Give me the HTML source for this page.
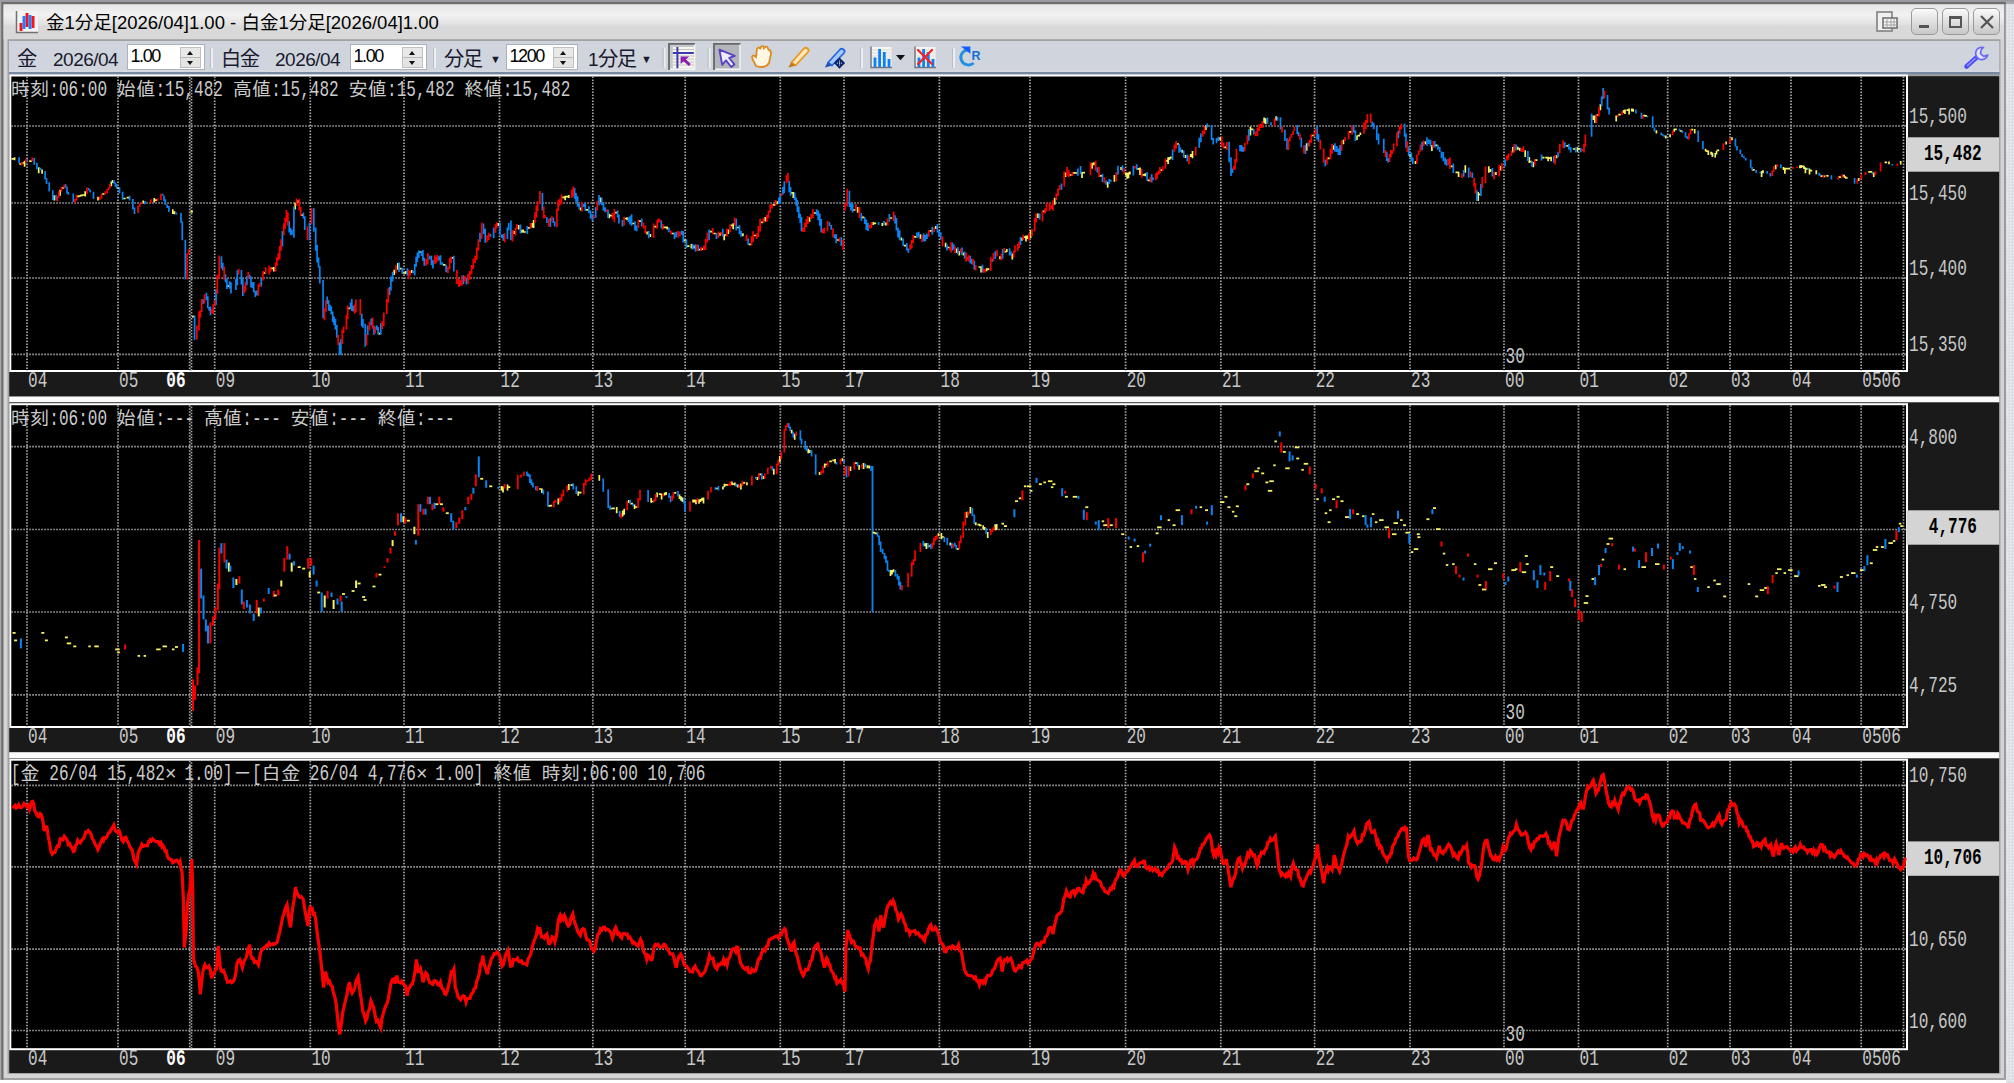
<!DOCTYPE html>
<html lang="ja"><head><meta charset="utf-8"><title>金1分足[2026/04]1.00 - 白金1分足[2026/04]1.00</title>
<style>
html,body{margin:0;padding:0;}
body{width:2014px;height:1083px;overflow:hidden;position:relative;background:#b4b4bc;font-family:"Liberation Sans","Noto Sans CJK JP",sans-serif;}
.abs{position:absolute;}
#ttext{position:absolute;left:46px;top:10.5px;font-size:18.5px;line-height:24px;color:#000;white-space:nowrap;transform-origin:0 0;}
#tool{position:absolute;left:8px;top:41px;width:1992px;height:31px;background:#d0d4dc;border-top:1px solid #b8b8bc;}
.tt{position:absolute;top:46.5px;font-size:20.3px;letter-spacing:-1.6px;line-height:24px;color:#1a1a30;white-space:nowrap;}
.n{font-size:19px;letter-spacing:-0.5px;top:47.5px;}
.spin{position:absolute;top:44px;height:26px;background:#fff;border:1px solid #aab0bc;box-sizing:border-box;}
.spin span{position:absolute;left:2.5px;top:-1px;font-size:18px;letter-spacing:-1.4px;line-height:24px;color:#000;}
.sb{position:absolute;right:3px;top:2px;width:21px;height:21px;background:linear-gradient(#e8e8e8 0,#e8e8e8 48%,#b8b8b8 48%,#b8b8b8 54%,#e4e4e4 54%);border:1px solid #c0c0c0;box-sizing:border-box;}
.sb:before{content:"";position:absolute;left:6px;top:3px;border:3.5px solid transparent;border-top:0;border-bottom:4px solid #111;}
.sb:after{content:"";position:absolute;left:6px;top:13px;border:3.5px solid transparent;border-bottom:0;border-top:4px solid #111;}
.sep{position:absolute;top:48px;width:2px;height:20px;background:#eceef2;border-left:1px solid #b8bcc4;}
.j{font-family:"Liberation Mono","IPAGothic",monospace;}
svg text{font-family:"Liberation Mono","IPAGothic",monospace;}
</style></head><body>

<svg class="abs" style="left:0;top:0" width="2014" height="1083" viewBox="0 0 2014 1083">
<defs><linearGradient id="tg" x1="0" y1="0" x2="0" y2="1"><stop offset="0" stop-color="#e6e6e6"/><stop offset="0.3" stop-color="#f1f1f1"/><stop offset="0.56" stop-color="#e2e2e2"/><stop offset="0.63" stop-color="#d9d9d9"/><stop offset="1" stop-color="#d8d8d8"/></linearGradient>
<pattern id="pt" width="3" height="3" patternUnits="userSpaceOnUse"><rect width="3" height="3" fill="#dcdee6"/><rect width="1.5" height="1.5" fill="#ececf2"/></pattern></defs>
<rect width="2014" height="1083" fill="#fff"/>
<rect x="0" y="0" width="2014" height="1080" fill="#a9a9ad"/>
<rect x="1.3" y="1.6" width="2004.5" height="1078" fill="#6e6e6e"/>
<rect x="0" y="0" width="2014" height="1.6" fill="#9c9ca4"/>
<rect x="3.5" y="4.4" width="2000.5" height="1073.8" fill="#d4d4d4"/>
<rect x="3.5" y="4.4" width="2000.5" height="35" fill="url(#tg)"/>
<rect x="2004.2" y="4.4" width="1.8" height="1075" fill="#a2a2a2"/>
<rect x="2006" y="4" width="8" height="1079" fill="url(#pt)"/>
<rect x="3.5" y="1078.2" width="2002.5" height="1.6" fill="#a8a8a8"/>
<rect x="7.5" y="39.2" width="1993" height="1034.8" fill="#a2a2a2"/>
<rect x="9" y="41" width="1990.3" height="31" fill="#d0d4dc"/>
<rect x="9" y="70" width="1990.3" height="2" fill="#d6dae0"/>
<rect x="9" y="72" width="1990.3" height="2.4" fill="#7688a2"/>
</svg>
<svg class="abs" style="left:14px;top:10px" width="26" height="24" viewBox="0 0 26 24">
<rect x="2" y="1" width="22" height="21" fill="#f4f4f4"/><path d="M2.5 1V22.5H24" fill="none" stroke="#707070" stroke-width="1.5"/>
<path d="M7 13v8M13 3v14M19 6v12" stroke="#ff1010" stroke-width="3"/><path d="M10 6v13M16 5v14" stroke="#1e80ff" stroke-width="3"/></svg>
<div id="ttext">金1分足[2026/04]1.00 - 白金1分足[2026/04]1.00</div>
<div class="abs" style="left:1911px;top:8px;width:27px;height:27px;border:1.5px solid #9a9a9a;border-radius:5px;box-sizing:border-box;background:linear-gradient(#fafafa,#e0e0e0 50%,#c8c8c8);"></div><div class="abs" style="left:1919px;top:25px;width:10px;height:3px;background:#555;"></div>
<div class="abs" style="left:1942px;top:8px;width:27px;height:27px;border:1.5px solid #9a9a9a;border-radius:5px;box-sizing:border-box;background:linear-gradient(#fafafa,#e0e0e0 50%,#c8c8c8);"></div><div class="abs" style="left:1949px;top:16px;width:13px;height:12px;border:2px solid #555;border-top-width:3px;box-sizing:border-box;"></div>
<div class="abs" style="left:1973px;top:8px;width:27px;height:27px;border:1.5px solid #9a9a9a;border-radius:5px;box-sizing:border-box;background:linear-gradient(#fafafa,#e0e0e0 50%,#c8c8c8);"></div><svg class="abs" style="left:1973px;top:8px" width="27" height="27"><path d="M8 8L20 20M20 8L8 20" stroke="#555" stroke-width="2.2"/></svg>
<svg class="abs" style="left:1875px;top:10px" width="26" height="26" viewBox="0 0 26 26"><rect x="2" y="2" width="15" height="19" fill="#f0f0f0" stroke="#808080" stroke-width="1.6"/><rect x="8" y="8" width="14" height="10" fill="#f8f8f8" stroke="#707070" stroke-width="1.6"/><path d="M8 12h14M8 15h14M12 8v10M16 8v10M19 8v10" stroke="#a0a0a0" stroke-width="1"/></svg>
<div class="tt" style="left:17px">金</div><div class="tt n" style="left:53px">2026/04</div>
<div class="spin" style="left:127px;width:78px"><span>1.00</span><div class="sb"></div></div>
<div class="sep" style="left:210px"></div>
<div class="tt" style="left:221px">白金</div><div class="tt n" style="left:275px">2026/04</div>
<div class="spin" style="left:350px;width:77px"><span>1.00</span><div class="sb"></div></div>
<div class="sep" style="left:433px"></div>
<div class="tt" style="left:444px">分足</div><div class="tt" style="left:490px;font-size:11px">&#9660;</div>
<div class="spin" style="left:506px;width:72px"><span>1200</span><div class="sb"></div></div>
<div class="tt" style="left:588px"><span class="n">1</span>分足</div><div class="tt" style="left:641px;font-size:11px">&#9660;</div>
<svg class="abs" style="left:660px;top:42px" width="340" height="30" viewBox="660 42 340 30">
<rect x="669" y="43" width="26" height="27" fill="#c4c8ce"/><path d="M669 70V43.8h26" fill="none" stroke="#686868" stroke-width="1.8"/><path d="M670 69.3h24.6V44.5" fill="none" stroke="#f4f4f4" stroke-width="1.5"/>
<rect x="672.8" y="47" width="21" height="21.3" fill="#f6f6ec"/><path d="M673 49.5h21M673 56h21M673 59h21M673 62h21M673 65h21" stroke="#c4c4c0" stroke-width="1"/>
<path d="M677.4 47v21.3M672.8 52.9h21" stroke="#3c3cb0" stroke-width="2"/><path d="M689.8 65L682.4 58.2" stroke="#9020b0" stroke-width="3" fill="none"/><path d="M680.6 56.6h8.6l-8.6 7.4z" fill="#9020b0"/>
<rect x="663.6" y="48" width="2" height="20" fill="#eceef2"/><rect x="662.6" y="48" width="1" height="20" fill="#b8bcc4"/>
<rect x="708.6" y="48" width="2" height="20" fill="#eceef2"/><rect x="707.6" y="48" width="1" height="20" fill="#b8bcc4"/>
<rect x="714" y="43" width="26.5" height="27" fill="#b2b6ba"/><path d="M714 70V43.8h26.5" fill="none" stroke="#686868" stroke-width="1.8"/><path d="M715 69.3h25V44.5" fill="none" stroke="#f4f4f4" stroke-width="1.5"/>
<path d="M719.4 49.6l15.4 6.2-5.6 2.2 5.2 6.4-3.2 2.6-5.2-6.6-3.8 4.4z" fill="#f0ecff" stroke="#5a40c4" stroke-width="1.9" stroke-linejoin="round"/>
<path d="M753 60c-2-4 0-6 3-3l1-8c1-2 3-2 3 0l1-2c1-2 3-1 3 1l1-1c2-1 3 0 3 2l1 1c2 0 2 2 2 4l-2 9c-2 4-8 5-13 3z" fill="#fff6e4" stroke="#dc8c20" stroke-width="1.8"/>
<path d="M791.5 62.5L804 48.5c2-2 6 1 4 3.500L795.500 65.500z" fill="#ffe8c0" stroke="#e89820" stroke-width="1.8" stroke-linejoin="round"/><path d="M788.400 67.600l2.800-5.400 4 3.600z" fill="#c07818"/>
<path d="M828 62.500L840 49.500c2-2 6 1 4 3.500L832 65.500z" fill="#a8c8ff" stroke="#2868e0" stroke-width="1.8" stroke-linejoin="round"/><path d="M824.800 67.600l2.800-5.400 4 3.600z" fill="#2050b0"/><path d="M839.500 57.500l5.600 5.600-5.600 5.600-5.600-5.600z" fill="#0c2468"/><path d="M839.500 60.500v5.200M836.900 63.100h5.200" stroke="#e8ecff" stroke-width="1" stroke-dasharray="1 1"/>
<rect x="861" y="48" width="2" height="20" fill="#eceef2"/><rect x="860" y="48" width="1" height="20" fill="#b8bcc4"/>
<rect x="871.500" y="47" width="20" height="20" fill="#f4f4f0"/><path d="M872 50h19M872 53h19M872 56h19M872 59h19M872 62h19" stroke="#dcdcd8" stroke-width="1"/>
<path d="M871 46.500v21h21" stroke="#70747c" stroke-width="1.400" fill="none"/><path d="M875 67v-9.500M879.600 67v-18M884.300 67v-15M889 67v-8" stroke="#0c80f8" stroke-width="2.800"/>
<path d="M896 55h9l-4.500 5.200z" fill="#101010"/>
<rect x="915.500" y="47" width="20" height="20" fill="#f4f4f0"/><path d="M916 50h19M916 53h19M916 56h19M916 59h19M916 62h19" stroke="#dcdcd8" stroke-width="1"/>
<path d="M915 46.500v21h21" stroke="#70747c" stroke-width="1.400" fill="none"/><path d="M919 67v-9.500M923.600 67v-18M928.300 67v-15M933 67v-8" stroke="#0c80f8" stroke-width="2.800"/><path d="M918 50l14 14M932 50l-14 14" stroke="#f82020" stroke-width="2.200" stroke-linecap="round"/>
<rect x="953" y="48" width="2" height="20" fill="#eceef2"/><rect x="952" y="48" width="1" height="20" fill="#b8bcc4"/>
<path d="M969.7 49.9A7.6 7.6 0 1 0 973.6 63" fill="none" stroke="#2090e4" stroke-width="2.9"/><path d="M960.8 46.4h9.6v7.4z" fill="#1060ff"/>
</svg>
<div class="abs" style="left:971.5px;top:48px;font-size:12.5px;font-weight:bold;color:#1070d8;line-height:16px;">R</div>
<svg class="abs" style="left:1962px;top:44px" width="28" height="28" viewBox="0 0 28 28"><path d="M4.500 22.500L14.500 13.500" stroke="#4a4aff" stroke-width="4.600" stroke-linecap="round"/><path d="M5.500 21.500L13 14.800" stroke="#9a9aff" stroke-width="1.400" stroke-linecap="round"/><path d="M21.500 3.500a6.200 6.200 0 1 0 4.300 7.600l-4.200 1.300-3.200-3 1.200-4.500z" fill="#e4e4ff" stroke="#6a6af4" stroke-width="1.700" stroke-linejoin="round"/></svg>
<svg class="abs" style="left:0;top:0" width="2014" height="1083" viewBox="0 0 2014 1083">
<rect x="9.3" y="76.2" width="1989.8" height="320.4" fill="#1a1a1a"/>
<rect x="10.3" y="75.5" width="1896.7" height="295.5" fill="#000" stroke="#fff" stroke-width="2"/>
<rect x="9.3" y="402.2" width="1989.8" height="350.1" fill="#1a1a1a"/>
<rect x="10.3" y="404.2" width="1896.7" height="322.8" fill="#000" stroke="#fff" stroke-width="2"/>
<rect x="9.3" y="758.2" width="1989.8" height="314.8" fill="#1a1a1a"/>
<rect x="10.3" y="759.7" width="1896.7" height="289.5" fill="#000" stroke="#fff" stroke-width="2"/>
<rect x="9.3" y="396.6" width="1989.8" height="5.6" fill="#fafafa"/>
<rect x="9.3" y="752.3" width="1989.8" height="5.9" fill="#fafafa"/>
<path d="M27 76.5V371 M118 76.5V371 M214.7 76.5V371 M310.3 76.5V371 M404 76.5V371 M499.5 76.5V371 M592.8 76.5V371 M685.2 76.5V371 M780.3 76.5V371 M844 76.5V371 M939.4 76.5V371 M1030 76.5V371 M1125.6 76.5V371 M1220.8 76.5V371 M1314.6 76.5V371 M1410 76.5V371 M1504 76.5V371 M1578.5 76.5V371 M1667.7 76.5V371 M1730 76.5V371 M1791 76.5V371 M1861.2 76.5V371 M1903.5 76.5V371 M189.7 76.5V371 M191.5 78V371 M11.3 126H1906 M11.3 203H1906 M11.3 278H1906 M11.3 354.3H1906 M27 405.2V727 M118 405.2V727 M214.7 405.2V727 M310.3 405.2V727 M404 405.2V727 M499.5 405.2V727 M592.8 405.2V727 M685.2 405.2V727 M780.3 405.2V727 M844 405.2V727 M939.4 405.2V727 M1030 405.2V727 M1125.6 405.2V727 M1220.8 405.2V727 M1314.6 405.2V727 M1410 405.2V727 M1504 405.2V727 M1578.5 405.2V727 M1667.7 405.2V727 M1730 405.2V727 M1791 405.2V727 M1861.2 405.2V727 M1903.5 405.2V727 M189.7 405.2V727 M191.5 406.7V727 M11.3 446.7H1906 M11.3 529.5H1906 M11.3 612H1906 M11.3 694.8H1906 M27 760.7V1049.2 M118 760.7V1049.2 M214.7 760.7V1049.2 M310.3 760.7V1049.2 M404 760.7V1049.2 M499.5 760.7V1049.2 M592.8 760.7V1049.2 M685.2 760.7V1049.2 M780.3 760.7V1049.2 M844 760.7V1049.2 M939.4 760.7V1049.2 M1030 760.7V1049.2 M1125.6 760.7V1049.2 M1220.8 760.7V1049.2 M1314.6 760.7V1049.2 M1410 760.7V1049.2 M1504 760.7V1049.2 M1578.5 760.7V1049.2 M1667.7 760.7V1049.2 M1730 760.7V1049.2 M1791 760.7V1049.2 M1861.2 760.7V1049.2 M1903.5 760.7V1049.2 M189.7 760.7V1049.2 M191.5 762.2V1049.2 M11.3 785.4H1906 M11.3 866.8H1906 M11.3 949.2H1906 M11.3 1030.5H1906" stroke="#a8a8a8" stroke-width="1.7" stroke-dasharray="1.5 1.5" fill="none"/>
<path d="M12.6 808.2 L13.8 806.9 L15.0 805.6 L16.2 808.0 L17.4 806.9 L18.7 804.7 L20.1 807.6 L21.4 807.7 L22.8 806.0 L24.1 803.4 L25.4 805.0 L26.8 806.6 L28.1 805.4 L29.5 809.5 L30.5 806.5 L31.6 801.8 L32.7 801.5 L33.7 803.9 L34.8 810.9 L36.2 813.1 L37.5 816.2 L38.8 816.7 L40.2 813.6 L41.5 814.8 L42.8 820.3 L44.2 831.0 L45.5 827.4 L46.9 827.0 L48.2 835.7 L49.5 843.0 L50.9 851.1 L52.2 854.0 L53.6 852.4 L54.9 852.4 L56.2 848.5 L57.6 845.7 L58.9 846.1 L60.3 838.7 L61.6 839.0 L62.9 839.7 L64.3 836.3 L65.6 837.8 L67.0 839.7 L68.3 844.4 L69.6 843.6 L71.0 847.0 L72.1 847.3 L73.3 851.5 L74.5 851.1 L75.5 845.7 L76.6 844.4 L77.7 840.3 L79.0 842.5 L80.3 843.0 L81.7 840.3 L83.0 839.0 L84.4 837.0 L85.7 832.1 L87.0 832.3 L88.4 830.6 L89.7 832.1 L91.1 834.5 L92.4 838.8 L93.7 840.7 L95.1 844.4 L96.4 846.0 L97.8 849.7 L98.9 847.5 L100.1 844.1 L101.2 841.7 L102.3 839.2 L103.4 840.7 L104.4 837.7 L105.8 838.1 L107.1 836.3 L108.5 832.7 L109.8 832.3 L111.1 829.6 L112.5 827.5 L113.8 825.1 L115.2 830.5 L116.5 831.8 L117.8 832.7 L119.2 831.0 L120.5 834.5 L121.9 840.3 L123.2 841.7 L124.5 837.7 L125.9 837.3 L127.2 840.8 L128.5 843.0 L129.9 847.1 L131.2 848.4 L132.6 851.8 L133.9 859.1 L135.2 861.7 L136.6 864.4 L137.9 854.5 L139.3 849.7 L140.6 848.0 L141.9 844.4 L143.3 846.3 L144.6 845.7 L146.0 845.7 L147.3 845.8 L148.6 841.7 L150.0 839.7 L151.3 841.0 L152.7 839.0 L154.0 840.4 L155.3 841.2 L156.7 841.7 L158.0 841.7 L159.3 844.1 L160.7 842.5 L161.8 846.5 L162.8 845.4 L163.9 847.0 L165.1 851.1 L166.2 850.8 L167.4 856.4 L168.7 858.6 L170.1 859.4 L171.4 859.6 L172.7 862.7 L174.1 862.0 L175.4 860.4 L176.6 860.1 L177.7 861.6 L178.9 863.1 L180.0 861.2 L181.0 867.8 L182.1 872.5 L183.4 899.3 L184.3 947.5 L186.1 931.4 L187.5 904.6 L188.8 893.9 L190.1 888.5 L191.8 859.1 L192.8 893.9 L193.4 958.2 L194.4 962.0 L195.5 966.2 L196.8 967.0 L198.2 971.6 L199.3 980.8 L200.3 994.3 L202.2 976.9 L203.5 968.4 L204.9 964.9 L206.2 967.7 L207.6 967.6 L208.9 966.1 L210.2 968.9 L211.6 978.3 L212.9 974.2 L214.2 972.9 L215.3 970.3 L216.4 968.9 L218.3 946.1 L220.1 966.2 L221.2 971.0 L222.3 971.6 L223.6 970.6 L225.0 974.2 L226.3 978.0 L227.6 982.3 L229.0 981.9 L230.3 980.9 L231.7 982.6 L233.0 981.8 L234.3 979.6 L235.7 973.6 L237.0 963.5 L238.4 960.3 L239.7 959.5 L241.0 963.1 L242.4 967.6 L243.7 962.7 L245.0 959.5 L246.4 957.0 L247.7 950.1 L249.6 944.8 L250.7 954.0 L251.7 958.2 L253.1 958.2 L254.4 962.2 L255.8 961.3 L257.1 962.5 L258.4 964.9 L259.8 956.7 L261.1 951.5 L262.5 949.4 L263.8 947.5 L265.1 947.5 L266.5 945.2 L267.8 946.1 L269.1 942.9 L270.5 944.8 L271.8 944.8 L273.2 943.6 L274.5 944.3 L275.8 943.4 L277.2 942.0 L278.5 936.5 L279.9 931.4 L281.2 924.8 L282.5 918.0 L283.9 914.0 L285.2 908.6 L287.1 904.6 L288.2 913.6 L289.2 920.7 L290.6 927.4 L291.9 913.5 L293.3 904.6 L294.3 898.2 L295.4 887.2 L296.6 892.1 L297.8 893.9 L299.0 896.9 L300.1 897.4 L301.3 896.6 L303.2 899.3 L304.2 905.4 L305.3 912.7 L306.6 918.8 L308.0 926.0 L309.1 913.8 L310.1 906.0 L311.2 909.4 L312.3 908.9 L313.3 914.0 L314.4 913.6 L315.5 918.0 L317.4 934.1 L319.2 947.5 L320.3 955.2 L321.4 966.2 L322.4 975.0 L323.5 987.6 L325.4 971.6 L326.7 976.0 L328.1 982.3 L329.4 981.1 L330.7 985.0 L332.1 986.2 L333.4 993.0 L334.8 996.4 L336.1 1003.7 L338.0 1021.1 L339.6 1034.5 L341.5 1022.5 L342.8 1012.2 L344.1 1006.4 L345.5 1000.3 L346.8 995.7 L348.2 986.3 L349.5 982.3 L350.8 989.7 L352.2 993.0 L353.5 991.0 L354.8 987.6 L355.9 982.1 L357.0 979.1 L358.1 976.9 L359.1 984.1 L360.2 993.0 L361.5 1001.6 L362.9 1011.7 L364.2 1014.3 L365.6 1021.1 L366.9 1018.4 L368.2 1011.7 L369.6 1009.1 L370.9 1001.0 L372.3 1004.2 L373.6 1007.7 L374.9 1014.3 L376.3 1021.1 L377.6 1020.1 L379.0 1023.8 L380.8 1027.8 L381.9 1018.9 L383.0 1014.4 L384.3 1010.0 L385.6 1006.0 L387.0 1003.7 L388.3 998.9 L389.7 990.3 L391.0 983.1 L392.3 979.6 L393.7 978.9 L395.0 983.6 L396.9 975.6 L398.0 981.5 L399.0 982.3 L400.4 982.9 L401.7 981.2 L403.1 983.6 L404.4 985.2 L405.7 986.3 L407.1 995.7 L408.4 989.0 L409.7 987.6 L411.1 984.7 L412.4 984.1 L413.8 978.3 L415.1 970.9 L416.4 959.5 L418.3 971.6 L419.4 971.3 L420.5 968.9 L421.8 974.2 L423.1 982.3 L424.5 976.8 L425.8 972.9 L427.2 974.4 L428.5 979.6 L429.6 982.5 L430.6 982.5 L431.7 983.6 L432.9 984.3 L434.0 980.9 L435.2 980.9 L436.5 981.4 L437.9 985.0 L439.2 985.4 L440.5 982.3 L441.9 988.3 L443.2 989.0 L444.6 993.6 L445.9 994.3 L447.2 991.4 L448.6 985.0 L449.9 980.0 L451.3 971.6 L452.6 971.6 L453.9 968.9 L455.3 987.6 L456.6 990.8 L458.0 997.0 L459.3 998.4 L460.6 999.7 L462.0 996.9 L463.3 995.7 L464.6 996.4 L466.0 1002.4 L467.3 998.4 L468.7 998.5 L470.0 998.4 L471.3 993.9 L472.7 993.2 L474.0 989.0 L475.4 988.0 L476.7 981.5 L478.0 978.3 L479.4 973.3 L480.7 963.5 L481.8 962.3 L482.9 955.5 L484.1 964.1 L485.3 967.6 L486.3 970.1 L487.4 974.2 L488.8 967.3 L490.1 963.5 L491.4 958.7 L492.8 956.8 L494.1 953.8 L495.4 954.2 L496.8 951.8 L498.1 952.8 L500.0 956.8 L501.1 962.2 L502.1 966.2 L503.2 964.9 L504.3 961.0 L505.4 955.5 L506.7 952.7 L508.0 950.1 L509.4 959.0 L510.7 966.2 L512.1 965.7 L513.4 959.4 L514.7 959.5 L516.1 959.7 L517.4 958.2 L518.7 961.4 L520.1 961.5 L521.4 960.9 L522.8 963.6 L524.1 963.5 L525.4 964.1 L526.8 964.9 L528.1 959.1 L529.5 956.8 L530.8 953.8 L532.1 947.5 L533.5 942.5 L534.8 939.4 L536.2 935.8 L537.5 928.7 L538.6 930.7 L539.6 927.4 L541.5 936.8 L542.8 936.8 L544.2 938.1 L545.5 935.5 L546.9 934.1 L548.7 943.4 L549.9 943.7 L551.1 940.2 L552.2 936.8 L553.6 937.6 L554.9 942.1 L556.8 934.1 L557.8 924.0 L558.9 918.0 L560.0 915.6 L561.1 919.4 L562.1 916.7 L563.3 918.8 L564.5 915.6 L565.6 918.0 L567.0 923.9 L568.3 926.0 L569.6 924.7 L571.0 918.0 L572.8 914.0 L573.9 919.6 L575.0 923.4 L576.3 926.5 L577.7 931.4 L579.0 933.7 L580.3 935.4 L581.7 930.0 L583.0 928.7 L584.4 929.3 L585.7 935.4 L587.0 939.8 L588.4 939.8 L589.7 940.8 L591.6 948.8 L592.8 949.0 L593.9 951.2 L595.1 948.8 L596.4 941.1 L597.8 934.1 L599.1 933.5 L600.4 928.7 L601.8 929.9 L603.1 927.4 L604.4 927.1 L605.8 930.1 L607.1 929.1 L608.5 929.8 L609.8 931.4 L611.1 933.3 L612.5 938.1 L613.6 935.0 L614.6 929.6 L615.7 927.4 L616.8 930.3 L617.8 934.1 L619.2 933.3 L620.5 936.8 L621.6 938.0 L622.7 933.8 L623.7 933.5 L624.9 933.5 L626.0 934.4 L627.2 934.1 L628.5 938.1 L629.9 937.2 L631.2 939.4 L632.6 943.1 L633.9 942.1 L635.2 943.4 L636.6 945.0 L637.9 946.1 L639.3 942.9 L640.6 939.4 L641.9 942.1 L643.3 950.1 L644.4 952.9 L645.6 954.6 L646.8 959.5 L648.1 955.4 L649.4 956.8 L650.8 959.9 L652.1 959.5 L654.0 947.5 L655.3 944.6 L656.7 945.2 L658.0 944.3 L659.3 946.6 L660.7 946.7 L662.0 947.5 L663.9 944.3 L665.1 944.8 L666.2 947.4 L667.4 948.8 L668.7 950.9 L670.1 954.0 L671.4 954.2 L672.7 954.0 L674.1 958.2 L675.1 963.2 L676.2 967.6 L677.6 960.8 L678.9 956.8 L680.8 954.2 L682.1 956.9 L683.4 962.2 L684.8 965.5 L686.1 965.8 L687.5 967.6 L688.8 969.2 L690.1 971.7 L691.5 971.6 L692.6 972.1 L693.8 967.7 L695.0 966.2 L696.0 968.6 L697.1 969.8 L698.2 971.6 L699.3 973.0 L700.3 975.3 L701.4 975.6 L702.6 974.0 L703.7 973.1 L704.9 971.6 L706.2 967.4 L707.6 963.5 L709.4 955.5 L710.6 958.9 L711.7 958.4 L712.9 958.2 L714.2 965.0 L715.6 967.6 L716.9 969.1 L718.3 964.4 L719.6 964.9 L720.9 963.4 L722.3 963.8 L723.6 959.5 L724.8 963.2 L725.9 961.1 L727.1 964.9 L728.2 959.6 L729.2 958.3 L730.3 955.5 L731.7 949.8 L733.0 948.8 L734.3 948.7 L735.7 951.5 L736.7 947.1 L737.8 947.5 L739.7 959.5 L741.0 963.8 L742.4 966.2 L743.7 968.2 L745.0 969.3 L746.4 967.6 L747.5 967.4 L748.5 972.3 L749.6 972.9 L750.8 972.9 L751.9 969.1 L753.1 970.2 L754.2 971.5 L755.4 971.1 L756.6 967.6 L757.9 961.3 L759.2 958.2 L760.3 958.5 L761.4 953.1 L762.5 951.5 L763.8 949.6 L765.1 950.7 L766.5 946.1 L767.8 945.8 L769.1 939.8 L770.5 939.4 L771.8 938.2 L773.2 937.7 L774.5 936.8 L775.8 936.3 L777.2 935.9 L778.5 938.1 L779.9 934.8 L781.2 934.9 L782.5 931.4 L784.4 928.7 L785.5 930.0 L786.6 936.8 L787.9 941.1 L789.2 944.8 L790.3 947.8 L791.4 951.5 L792.7 944.1 L794.1 942.1 L795.9 952.8 L797.3 956.6 L798.6 962.2 L799.9 967.6 L801.3 971.6 L803.2 975.6 L804.3 973.9 L805.5 969.6 L806.6 970.2 L808.0 969.8 L809.3 965.6 L810.7 960.9 L812.0 959.5 L813.3 952.8 L814.4 947.9 L815.5 946.2 L816.6 944.8 L817.7 944.0 L818.9 949.9 L820.0 950.1 L821.4 954.2 L822.7 960.9 L824.6 967.6 L825.7 960.8 L826.7 958.2 L827.8 960.0 L828.9 964.9 L829.9 964.9 L831.0 970.0 L832.1 971.6 L833.4 973.6 L834.8 978.3 L835.8 977.6 L836.9 983.3 L838.0 982.3 L839.3 981.3 L840.7 979.6 L842.1 983.4 L843.6 985.0 L844.9 991.7 L846.0 947.5 L847.6 930.1 L849.5 935.4 L851.4 942.1 L852.5 940.7 L853.7 941.4 L854.8 944.8 L856.2 947.2 L857.5 947.0 L858.9 948.8 L860.2 948.2 L861.5 954.8 L862.9 954.2 L864.2 956.9 L865.6 958.2 L866.9 965.2 L868.2 968.9 L869.3 962.5 L870.4 960.9 L872.3 942.1 L873.3 936.1 L874.4 926.0 L876.3 920.7 L877.6 923.6 L879.0 931.4 L880.8 915.3 L882.2 923.4 L883.5 927.4 L884.6 921.1 L885.6 915.3 L886.7 909.7 L887.8 906.0 L889.1 904.2 L890.5 901.9 L891.8 903.7 L893.1 900.6 L894.5 904.0 L895.8 910.0 L897.2 912.6 L898.5 919.3 L899.8 916.8 L901.2 914.0 L902.5 916.5 L903.9 922.0 L905.2 923.9 L906.5 930.1 L907.6 929.5 L908.7 930.2 L909.7 934.1 L911.1 931.5 L912.4 931.2 L913.8 931.4 L914.9 930.8 L916.1 933.7 L917.2 932.7 L918.3 932.9 L919.4 935.4 L920.5 936.8 L921.8 936.3 L923.1 938.6 L924.5 940.8 L925.8 934.7 L927.2 934.1 L928.5 928.7 L929.8 926.0 L931.0 924.7 L932.2 930.0 L933.3 930.1 L934.4 929.9 L935.5 927.4 L936.5 928.7 L937.9 932.6 L939.2 936.8 L940.5 942.5 L941.9 943.4 L943.2 945.3 L944.6 951.5 L945.9 951.9 L947.2 948.4 L948.6 947.5 L949.9 947.0 L951.3 948.4 L952.6 946.1 L953.9 946.9 L955.3 948.8 L956.3 947.5 L957.4 947.2 L958.5 944.8 L959.8 950.8 L961.2 951.5 L962.2 956.6 L963.3 963.5 L964.6 970.1 L966.0 972.9 L967.3 975.0 L968.7 975.5 L970.0 975.6 L971.3 975.9 L972.7 976.5 L974.0 978.3 L975.4 977.1 L976.7 980.9 L978.0 980.9 L979.4 985.0 L980.7 980.5 L982.1 980.9 L983.1 982.7 L984.2 980.5 L985.3 982.3 L986.4 978.2 L987.6 975.5 L988.8 975.6 L990.1 975.7 L991.4 974.1 L992.8 970.2 L994.1 969.2 L995.4 966.2 L996.8 961.6 L998.1 959.5 L1000.0 958.2 L1001.1 963.4 L1002.1 971.6 L1003.5 964.4 L1004.8 959.5 L1005.9 959.7 L1007.0 958.5 L1008.0 960.9 L1009.4 959.2 L1010.7 958.2 L1012.1 961.5 L1013.4 967.6 L1014.5 970.6 L1015.5 971.1 L1016.6 968.9 L1017.8 968.3 L1018.9 965.7 L1020.1 966.2 L1021.4 967.5 L1022.8 962.5 L1024.1 962.2 L1025.4 961.8 L1026.8 960.3 L1028.1 963.5 L1029.5 961.1 L1030.8 959.8 L1032.1 958.2 L1033.5 952.8 L1034.8 947.5 L1036.2 943.8 L1037.5 943.4 L1038.8 944.8 L1040.2 946.1 L1041.5 942.0 L1042.8 942.1 L1044.2 942.1 L1045.3 937.1 L1046.5 936.2 L1047.7 934.1 L1049.0 928.2 L1050.3 927.4 L1051.7 928.1 L1053.0 934.1 L1054.4 926.3 L1055.7 920.7 L1057.0 915.8 L1058.4 914.0 L1059.5 913.6 L1060.5 912.4 L1061.6 911.3 L1062.7 906.7 L1063.7 899.3 L1065.1 896.1 L1066.4 891.2 L1067.8 895.1 L1069.1 896.6 L1070.2 896.9 L1071.2 892.4 L1072.3 891.2 L1073.6 890.7 L1075.0 894.8 L1076.3 892.6 L1077.7 888.6 L1079.0 888.5 L1080.3 891.1 L1081.7 892.0 L1083.0 892.6 L1084.1 886.0 L1085.2 886.4 L1086.2 880.5 L1087.6 884.0 L1088.9 883.2 L1090.3 880.8 L1091.8 878.3 L1093.2 873.8 L1094.3 877.4 L1095.3 875.4 L1096.4 879.2 L1097.8 880.2 L1099.1 881.0 L1100.4 881.9 L1101.6 886.0 L1102.7 888.0 L1103.9 888.5 L1105.0 891.7 L1106.1 891.7 L1107.1 892.6 L1108.2 893.4 L1109.3 890.9 L1110.3 888.5 L1111.5 889.2 L1112.7 886.1 L1113.8 887.2 L1115.0 881.5 L1116.1 878.9 L1117.3 877.8 L1118.6 873.0 L1120.0 869.8 L1121.3 870.3 L1122.7 875.2 L1123.7 876.1 L1124.8 873.7 L1125.9 872.5 L1127.2 871.4 L1128.5 869.6 L1129.9 867.1 L1131.0 866.4 L1132.2 863.5 L1133.4 861.8 L1134.4 860.3 L1135.5 866.1 L1136.6 865.8 L1137.7 866.3 L1138.7 864.0 L1139.8 863.1 L1141.0 862.7 L1142.1 862.7 L1143.3 861.2 L1144.4 861.2 L1145.6 867.4 L1146.8 868.5 L1147.8 867.5 L1148.9 867.0 L1150.0 869.8 L1151.3 868.3 L1152.7 870.7 L1154.0 869.3 L1155.3 868.0 L1156.7 871.3 L1158.0 870.3 L1159.3 874.6 L1160.7 873.5 L1162.0 875.2 L1163.2 872.7 L1164.3 871.5 L1165.5 869.8 L1166.8 869.0 L1168.0 867.7 L1169.3 864.4 L1170.4 863.8 L1171.6 862.6 L1172.7 860.4 L1174.6 847.0 L1176.0 850.0 L1177.3 857.8 L1178.6 857.1 L1180.0 860.4 L1181.1 859.9 L1182.3 863.6 L1183.4 863.1 L1184.8 861.3 L1186.1 861.8 L1188.0 869.8 L1189.3 865.5 L1190.7 860.4 L1192.0 859.7 L1193.4 864.4 L1194.5 860.2 L1195.7 859.6 L1196.8 859.1 L1198.0 856.5 L1199.2 853.0 L1200.3 848.4 L1201.4 848.0 L1202.5 844.5 L1203.5 844.4 L1204.9 841.8 L1206.2 839.0 L1207.3 837.5 L1208.4 836.1 L1209.4 835.0 L1210.5 836.9 L1211.6 843.0 L1212.6 851.3 L1213.7 855.1 L1214.8 852.0 L1215.9 855.1 L1216.9 851.1 L1218.0 853.1 L1219.1 847.5 L1220.1 849.7 L1221.5 856.2 L1222.8 863.1 L1224.0 863.6 L1225.1 863.0 L1226.3 859.1 L1227.6 866.8 L1229.0 875.2 L1230.9 887.2 L1232.0 882.8 L1233.2 879.3 L1234.3 877.8 L1235.7 873.0 L1237.0 863.1 L1238.4 858.8 L1239.7 857.8 L1241.0 863.6 L1242.4 868.5 L1243.7 864.4 L1245.0 864.4 L1246.4 859.2 L1247.7 853.7 L1249.1 855.8 L1250.4 850.8 L1251.7 852.4 L1253.1 855.5 L1254.4 855.1 L1255.8 860.5 L1257.1 865.8 L1258.2 863.3 L1259.2 856.4 L1260.3 856.2 L1261.4 852.2 L1262.5 852.4 L1263.8 853.3 L1265.1 849.6 L1266.5 848.4 L1267.8 842.4 L1269.1 841.7 L1270.3 838.5 L1271.5 840.7 L1272.6 840.3 L1274.0 838.1 L1275.3 836.3 L1277.2 851.1 L1279.1 869.8 L1280.1 871.4 L1281.2 875.2 L1282.5 873.6 L1283.9 875.2 L1285.2 876.5 L1286.4 874.1 L1287.5 875.7 L1288.7 872.5 L1290.6 876.5 L1291.9 867.0 L1293.3 863.1 L1294.4 866.7 L1295.6 869.5 L1296.7 869.8 L1297.8 870.4 L1298.9 877.5 L1299.9 877.8 L1301.0 881.7 L1302.1 885.4 L1303.2 885.9 L1304.5 881.3 L1305.8 879.2 L1307.0 875.8 L1308.2 873.2 L1309.3 871.1 L1310.5 872.6 L1311.6 869.0 L1312.8 867.1 L1314.1 861.7 L1315.5 857.8 L1317.4 844.4 L1319.2 859.1 L1320.3 864.0 L1321.4 869.8 L1322.4 875.2 L1323.5 883.2 L1324.9 874.6 L1326.2 871.1 L1327.3 867.6 L1328.3 870.3 L1329.4 867.1 L1330.7 867.3 L1332.1 869.8 L1333.2 864.9 L1334.2 855.1 L1335.6 859.7 L1336.9 867.1 L1338.2 867.8 L1339.6 871.1 L1340.9 866.5 L1342.3 861.8 L1343.3 855.6 L1344.4 852.1 L1345.5 848.4 L1346.8 844.9 L1348.2 836.3 L1349.2 838.0 L1350.3 837.2 L1351.4 835.0 L1352.7 833.7 L1354.0 831.0 L1355.1 838.0 L1356.2 840.3 L1357.5 843.3 L1358.9 841.5 L1360.2 841.7 L1361.4 840.7 L1362.5 834.7 L1363.7 835.0 L1365.0 830.9 L1366.4 824.3 L1367.7 822.7 L1369.0 821.6 L1370.4 828.4 L1371.7 832.3 L1373.1 832.4 L1374.4 831.0 L1375.7 835.8 L1377.1 843.0 L1378.1 841.4 L1379.2 847.2 L1380.3 845.7 L1381.6 847.6 L1383.0 853.7 L1384.3 855.8 L1385.6 857.3 L1387.0 860.4 L1388.1 857.1 L1389.3 857.3 L1390.5 853.7 L1391.5 853.3 L1392.6 846.1 L1393.7 844.4 L1394.8 843.0 L1395.8 838.8 L1396.9 837.7 L1398.1 835.8 L1399.2 832.6 L1400.4 831.0 L1401.5 828.7 L1402.7 828.2 L1403.9 829.6 L1405.2 827.3 L1406.5 828.3 L1408.4 856.4 L1409.7 860.7 L1411.1 860.4 L1412.4 860.0 L1413.8 858.0 L1415.1 859.1 L1416.2 860.0 L1417.2 859.2 L1418.3 855.1 L1419.7 850.1 L1421.0 845.7 L1422.3 840.3 L1423.7 839.0 L1424.7 841.3 L1425.8 847.0 L1426.9 838.7 L1428.0 835.0 L1429.3 841.5 L1430.6 849.7 L1431.7 849.2 L1432.8 851.8 L1433.9 855.1 L1435.2 855.1 L1436.5 857.8 L1437.9 852.1 L1439.2 845.7 L1440.5 851.2 L1441.9 852.4 L1443.0 853.3 L1444.0 851.0 L1445.1 851.1 L1446.3 848.3 L1447.4 846.7 L1448.6 844.4 L1450.0 845.7 L1451.1 848.1 L1452.1 851.0 L1453.2 855.1 L1454.4 853.5 L1455.5 855.6 L1456.7 857.8 L1458.0 859.0 L1459.4 853.0 L1460.7 853.7 L1462.1 850.4 L1463.4 847.0 L1464.5 847.3 L1465.5 848.2 L1466.6 845.7 L1467.7 852.8 L1468.7 863.1 L1470.1 863.8 L1471.4 867.1 L1472.5 865.3 L1473.6 865.7 L1474.6 865.8 L1475.8 869.9 L1477.0 877.3 L1478.1 879.2 L1479.5 875.8 L1480.8 868.5 L1482.1 860.5 L1483.5 848.4 L1484.6 843.0 L1485.8 840.4 L1487.0 840.3 L1488.3 846.9 L1489.6 851.1 L1490.7 855.9 L1491.8 856.3 L1492.8 859.1 L1494.2 859.8 L1495.5 856.6 L1496.9 859.6 L1498.0 857.9 L1499.2 859.9 L1500.3 856.4 L1501.7 853.5 L1503.0 847.0 L1504.1 849.5 L1505.2 850.6 L1506.2 848.4 L1507.3 843.0 L1508.4 838.2 L1509.5 836.3 L1510.6 833.1 L1511.8 833.8 L1512.9 832.3 L1514.1 830.7 L1515.3 829.4 L1516.4 824.3 L1517.8 828.9 L1519.1 831.0 L1520.2 833.1 L1521.2 835.1 L1522.3 835.0 L1523.4 833.9 L1524.5 833.5 L1525.5 832.3 L1526.9 834.4 L1528.2 841.7 L1529.5 847.3 L1530.9 849.7 L1532.0 845.5 L1533.2 846.7 L1534.4 841.7 L1535.7 841.6 L1537.0 838.8 L1538.4 839.0 L1539.7 836.0 L1541.1 835.8 L1542.4 836.3 L1543.6 836.2 L1544.7 835.7 L1545.9 833.6 L1547.2 836.2 L1548.6 843.0 L1549.6 842.4 L1550.7 846.7 L1551.8 848.4 L1553.1 845.5 L1554.4 841.7 L1555.5 848.4 L1556.6 856.4 L1557.9 844.2 L1559.3 835.0 L1560.6 830.2 L1561.9 824.3 L1563.0 820.2 L1564.1 820.5 L1565.2 820.3 L1566.5 823.2 L1567.8 829.1 L1569.2 829.6 L1570.5 825.8 L1571.9 820.3 L1573.2 819.7 L1574.5 814.9 L1575.7 813.0 L1576.9 809.8 L1578.0 809.5 L1579.4 804.8 L1580.7 802.8 L1582.0 808.1 L1583.4 808.2 L1584.4 803.5 L1585.5 795.5 L1586.6 790.8 L1587.7 786.8 L1588.7 788.1 L1589.8 786.8 L1591.0 785.5 L1592.1 781.9 L1593.3 780.1 L1594.6 785.4 L1596.0 793.5 L1597.1 791.7 L1598.3 790.5 L1599.4 785.4 L1600.7 780.3 L1601.9 775.7 L1603.2 774.7 L1604.5 781.2 L1605.9 789.5 L1607.2 795.7 L1608.5 802.8 L1609.9 805.9 L1611.2 806.9 L1612.4 802.9 L1613.5 804.1 L1614.7 800.2 L1615.9 804.6 L1617.0 806.4 L1618.2 809.5 L1619.3 803.4 L1620.3 803.2 L1621.4 796.2 L1622.7 793.3 L1624.1 794.4 L1625.4 790.8 L1626.8 788.0 L1628.1 786.6 L1629.4 786.8 L1630.8 790.0 L1632.1 789.2 L1633.4 792.1 L1634.8 798.7 L1636.1 800.2 L1637.3 801.0 L1638.4 800.2 L1639.6 802.8 L1640.7 799.5 L1641.8 798.8 L1642.8 797.5 L1643.9 797.5 L1645.0 798.2 L1646.0 794.8 L1647.2 795.1 L1648.4 798.7 L1649.5 801.5 L1650.9 806.6 L1652.2 814.9 L1653.4 819.3 L1654.5 816.5 L1655.7 820.3 L1657.0 815.1 L1658.4 814.9 L1659.4 815.6 L1660.5 820.6 L1661.6 824.3 L1662.6 826.1 L1663.7 825.5 L1664.8 822.9 L1665.9 822.5 L1667.1 822.2 L1668.3 817.6 L1669.6 817.8 L1670.9 812.2 L1672.3 810.9 L1673.4 811.4 L1674.4 817.8 L1675.5 817.6 L1676.7 818.1 L1677.8 813.2 L1679.0 814.9 L1680.1 818.5 L1681.3 819.6 L1682.5 822.9 L1683.5 822.7 L1684.6 822.9 L1685.7 824.3 L1687.0 824.4 L1688.4 828.3 L1689.7 820.2 L1691.0 817.6 L1692.4 811.0 L1693.7 806.9 L1694.8 804.7 L1695.8 804.2 L1697.2 810.8 L1698.5 812.2 L1699.6 812.8 L1700.7 820.2 L1701.7 820.3 L1703.1 820.0 L1704.4 822.1 L1705.8 824.3 L1707.1 827.0 L1708.4 827.9 L1709.8 827.0 L1711.1 826.1 L1712.5 823.5 L1713.8 825.6 L1715.1 822.8 L1716.5 820.3 L1717.8 816.9 L1719.1 814.9 L1720.5 821.9 L1721.8 824.3 L1723.0 821.2 L1724.1 820.8 L1725.3 820.3 L1726.4 818.9 L1727.5 810.5 L1728.5 809.5 L1729.9 805.7 L1731.2 802.8 L1732.3 805.0 L1733.3 805.2 L1734.4 804.2 L1735.8 806.3 L1737.1 813.6 L1738.2 815.6 L1739.2 822.9 L1740.6 819.8 L1741.9 821.6 L1743.3 826.6 L1744.6 827.0 L1745.7 826.9 L1746.7 831.0 L1747.8 831.0 L1749.0 836.3 L1750.1 836.3 L1751.3 840.3 L1752.4 840.9 L1753.6 846.5 L1754.8 845.7 L1755.8 845.5 L1756.9 842.6 L1758.0 843.0 L1759.1 845.6 L1760.1 844.7 L1761.2 847.0 L1762.5 842.4 L1763.9 840.3 L1765.0 839.3 L1766.2 845.3 L1767.4 845.7 L1768.5 847.6 L1769.7 845.6 L1770.8 844.4 L1772.2 852.9 L1773.5 856.4 L1774.9 847.1 L1776.2 843.0 L1777.5 847.6 L1778.9 855.1 L1780.2 848.9 L1781.5 843.0 L1782.6 846.9 L1783.7 848.2 L1784.8 847.0 L1785.8 846.8 L1786.9 846.5 L1788.0 848.4 L1789.3 849.3 L1790.7 851.1 L1791.8 850.1 L1793.0 851.7 L1794.1 848.4 L1795.3 847.0 L1796.5 851.0 L1797.6 849.7 L1799.0 848.4 L1800.3 844.4 L1801.4 847.1 L1802.4 847.7 L1803.5 847.0 L1804.8 849.4 L1806.2 849.6 L1807.5 852.4 L1808.7 850.5 L1809.8 849.8 L1811.0 849.7 L1812.3 852.6 L1813.5 850.0 L1814.8 853.7 L1815.9 851.6 L1817.1 854.3 L1818.2 852.4 L1819.6 847.0 L1820.9 844.4 L1822.3 844.6 L1823.6 849.7 L1824.9 848.0 L1826.3 851.8 L1827.6 852.4 L1829.0 851.9 L1830.3 856.0 L1831.6 853.7 L1833.0 856.3 L1834.3 857.4 L1835.6 855.1 L1837.0 852.9 L1838.3 851.0 L1839.7 852.4 L1840.8 850.6 L1842.0 853.3 L1843.1 853.7 L1844.2 856.2 L1845.3 856.1 L1846.4 857.8 L1847.4 857.2 L1848.5 859.1 L1849.6 860.4 L1850.7 862.0 L1851.9 863.2 L1853.1 863.1 L1854.4 865.8 L1855.7 865.8 L1857.1 864.4 L1858.4 859.1 L1859.6 858.7 L1860.7 854.3 L1861.9 855.1 L1863.0 856.7 L1864.0 853.4 L1865.1 854.3 L1866.2 855.4 L1867.2 855.0 L1868.3 856.4 L1869.5 859.1 L1870.6 857.4 L1871.8 860.4 L1873.0 859.9 L1874.1 860.8 L1875.3 863.1 L1876.4 859.8 L1877.4 862.6 L1878.5 859.1 L1879.6 858.2 L1880.6 855.4 L1881.7 855.1 L1882.9 854.0 L1884.0 856.9 L1885.2 853.7 L1886.4 855.1 L1887.5 854.9 L1888.7 857.8 L1889.7 860.4 L1890.8 860.4 L1891.9 860.4 L1893.2 863.6 L1894.6 859.1 L1895.9 861.8 L1897.1 863.4 L1898.2 867.1 L1899.4 867.1 L1900.7 869.7 L1902.1 868.5 L1903.4 866.8 L1904.7 860.4 L1906.1 857.8" fill="none" stroke="#fa0000" stroke-width="3.2" stroke-linejoin="miter"/>
<path d="M11.5 158.8h2.6 M14.6 157.2v3.0 M19.2 164.0h2.6 M21.9 163.0h2.6 M24.6 160.8v6.0 M29.2 161.1h2.6 M38.7 167.2v6.0 M42.1 169.6V173.7 M54.1 195.2V200.5 M60.1 189.8v6.0 M61.6 187.8h2.6 M76.9 196.3h2.6 M78.5 196.0h2.6 M80.3 195.4h2.6 M82.1 195.0h2.6 M85.2 191.2V196.4 M98.0 196.7V200.6 M102.0 194.0h2.6 M111.3 181.6V186.2 M112.6 180.0v3.0 M116.8 188.1h2.6 M123.1 198.5h2.6 M126.6 197.7h2.6 M143.2 200.5v3.0 M154.2 198.1v4.5 M154.5 200.1h2.6 M172.8 209.3V214.1 M174.5 211.2v3.0" stroke="#f6f264" stroke-width="1.7" fill="none"/>
<path d="M19.1 157.2V163.3 M27.3 159.0V161.6 M34.2 158.0V164.8 M36.9 162.8V169.2 M40.5 167.7V170.5 M45.1 171.1V179.2 M46.5 177.9V184.0 M49.2 182.3V191.4 M52.8 190.2V199.9 M56.0 195.1V200.4 M65.6 184.3V187.8 M67.0 186.7V193.4 M68.3 192.0V194.7 M73.3 193.4V202.1 M88.6 188.1V190.4 M90.2 189.7V192.5 M93.5 191.7V199.1 M114.0 180.3V183.7 M115.4 182.4V186.7 M116.7 184.2V188.4 M119.5 187.5V193.5 M122.6 191.8V199.8 M129.6 195.7V200.5 M132.9 199.1V209.2 M134.5 207.5V213.9 M144.9 201.1V204.3 M162.7 193.7V195.8 M164.0 195.7V201.0 M165.4 199.3V204.9 M167.2 204.4V207.9 M168.9 206.1V212.0 M176.3 212.6V214.5 M181.0 213.1V222.8 M182.3 221.4V240.3 M185.3 239.8V279.2" stroke="#0a84f2" stroke-width="1.7" fill="none"/>
<path d="M21.9 162.1V165.2 M26.0 158.6V162.5 M32.3 157.5V161.3 M57.4 196.3V201.3 M58.8 191.3V197.7 M61.5 186.9V191.8 M64.2 184.6V188.4 M74.9 198.9V203.1 M76.5 194.8V200.5 M86.9 187.6V193.8 M99.8 196.7V200.1 M101.6 193.7V198.5 M105.2 191.2V194.2 M107.2 189.0V193.5 M108.5 187.4V190.3 M109.9 184.1V188.5 M138.1 205.8V213.1 M139.8 203.6V206.7 M141.6 202.1V203.8 M150.8 199.2V203.2 M157.5 198.6V200.9 M160.9 193.8V199.9 M187.0 253.6V279.2 M188.6 248.9V254.5" stroke="#f80000" stroke-width="1.7" fill="none"/>
<path d="M190.5 211.5h2.4" stroke="#f6f264" stroke-width="2"/>
<path d="M192.0 316.6h2.6 M227.0 286.2h2.6 M263.1 273.0h2.6 M270.7 268.3h2.6 M273.8 267.0v4.5 M295.2 202.7V209.6 M298.0 200.3V202.8 M300.8 215.2h2.6 M347.8 308.4h2.6 M378.1 333.7h2.6 M394.2 269.7V274.9 M397.8 263.1V269.7 M399.2 268.7h2.6 M402.7 273.0h2.6 M405.7 271.0v3.0 M411.7 270.1v3.0 M418.9 252.0h2.6 M442.9 264.9h2.6 M451.1 257.9h2.6 M498.1 223.1v3.0 M514.2 230.9v3.0 M518.7 224.9v4.5 M521.9 229.7v3.0 M523.2 229.6v3.0 M523.3 232.0h2.6 M527.4 227.9h2.6 M532.3 223.0v4.5 M533.6 219.9V228.1 M562.1 197.3h2.6 M565.2 195.8v4.5 M565.7 196.6h2.6 M568.8 194.9v3.0 M580.6 207.4v3.0 M585.8 209.9h2.6 M600.3 197.6v4.5 M609.3 213.7v4.5 M609.7 215.7h2.6 M614.9 212.7h2.6 M624.5 218.5h2.6 M627.1 217.3v3.0 M632.1 223.5h2.6 M638.7 221.2h2.6 M647.1 231.4v3.0 M650.4 233.9v3.0 M654.1 226.7h2.6 M662.7 227.3h2.6 M664.1 227.3h2.6 M667.2 226.5v3.0 M671.5 233.5h2.6 M683.5 240.4h2.6 M686.9 246.1h2.6 M691.4 244.1v4.5 M694.1 245.5v3.0 M698.3 249.7h2.6 M701.0 249.1h2.6 M709.6 231.7h2.6 M713.3 233.5h2.6 M720.1 232.8v3.0 M724.2 234.3v6.0 M724.2 235.0h2.6 M728.3 229.6v4.5 M730.5 225.4h2.6 M733.2 223.3v6.0 M736.5 227.5h2.6 M742.9 233.2v3.0 M748.6 244.4h2.6 M753.5 235.5h2.6 M760.6 222.3h2.6 M765.2 216.9v4.5 M772.5 204.9h2.6 M777.2 201.2v3.0 M790.7 192.9h2.6 M793.3 192.1v6.0 M809.5 217.2v4.5 M813.5 213.0h2.6 M836.6 240.0h2.6 M853.0 210.0h2.6 M857.7 206.9V212.7 M861.7 217.4h2.6 M873.2 222.1v3.0 M873.6 223.3h2.6 M882.3 223.1v3.0 M885.9 222.5v3.0 M889.6 218.0h2.6 M901.4 237.5v3.0 M903.7 245.6h2.6 M913.8 236.8h2.6 M920.4 234.2V238.8 M929.3 230.8h2.6 M935.8 225.9v3.0 M945.6 242.7v4.5 M947.0 247.5h2.6 M956.5 248.4v4.5 M959.3 251.0v4.5 M963.4 252.6v3.0 M978.5 267.0h2.6 M981.1 266.5v6.0 M986.6 268.3v3.0 M986.7 269.2h2.6" stroke="#f6f264" stroke-width="1.7" fill="none"/>
<path d="M194.6 315.6V339.8 M203.1 299.2V304.1 M206.4 292.8V300.2 M207.8 296.2V308.3 M209.1 307.1V310.7 M210.5 306.4V315.2 M216.0 289.3V305.0 M221.4 256.3V268.4 M222.8 262.8V270.5 M225.5 274.3V282.2 M226.9 278.5V289.0 M229.6 281.2V288.7 M231.0 282.2V293.5 M235.9 278.7V290.0 M237.3 270.3V285.3 M241.4 270.1V284.4 M242.8 278.5V295.9 M246.9 276.0V285.3 M249.6 274.7V279.0 M251.0 276.4V287.2 M252.3 282.2V288.1 M253.7 282.1V292.3 M255.3 290.8V297.0 M257.0 290.6V295.5 M261.3 277.6V286.5 M282.4 231.1V246.4 M289.2 221.0V232.4 M290.6 227.9V235.2 M292.0 229.8V234.8 M293.9 206.7V237.8 M303.4 212.5V218.5 M304.8 216.3V230.1 M309.5 222.4V240.2 M313.8 208.2V231.8 M315.7 227.6V250.8 M317.1 245.1V262.4 M318.5 257.4V267.6 M319.8 266.0V283.6 M323.1 279.9V318.3 M327.2 296.6V304.0 M328.6 300.3V310.7 M330.0 304.7V311.1 M331.3 306.6V314.6 M332.7 311.4V322.1 M334.1 316.4V325.2 M335.4 318.9V329.6 M336.8 325.1V337.8 M339.5 342.2V355.1 M340.9 339.3V355.0 M350.5 302.6V308.6 M351.8 299.1V311.0 M353.2 305.8V311.6 M361.7 313.6V326.2 M363.0 319.1V327.7 M365.2 323.7V346.6 M367.7 325.6V335.2 M371.2 318.4V325.6 M374.0 325.8V334.8 M376.7 325.3V329.9 M378.1 326.9V334.2 M380.8 323.2V334.6 M389.6 287.0V295.3 M390.9 276.6V290.6 M392.6 271.8V281.4 M399.1 262.6V272.1 M402.3 267.7V274.0 M407.3 268.3V275.8 M413.3 271.1V273.2 M414.7 264.1V275.6 M416.1 256.8V266.8 M417.4 252.4V262.0 M418.8 250.4V257.9 M421.5 251.1V256.0 M422.9 249.9V260.8 M424.3 257.7V265.7 M429.6 255.4V259.5 M431.4 255.7V264.9 M433.0 260.3V268.5 M438.8 256.2V260.4 M440.5 255.3V264.8 M442.3 262.2V265.1 M446.1 264.8V272.3 M453.8 255.8V271.4 M463.4 275.3V284.1 M466.4 277.7V284.4 M480.0 232.7V242.0 M483.5 223.4V234.0 M485.2 228.8V242.7 M490.4 233.9V236.8 M493.7 227.5V238.2 M500.0 222.4V234.7 M501.6 234.5V238.0 M503.3 234.1V240.8 M507.4 227.5V238.9 M508.7 222.9V230.3 M510.9 220.4V240.3 M520.5 224.5V233.5 M527.3 225.9V233.9 M542.4 192.9V210.5 M546.9 217.2V222.9 M550.3 217.9V226.9 M553.3 217.4V223.1 M554.7 221.6V226.4 M574.6 188.1V198.7 M576.0 192.9V201.8 M577.6 196.3V206.7 M579.3 203.9V209.3 M583.7 203.7V207.0 M585.3 203.0V210.9 M588.8 206.2V213.3 M590.6 210.5V218.8 M592.4 214.0V221.2 M595.7 207.1V217.8 M599.0 195.0V205.2 M601.7 197.5V205.2 M603.5 201.9V210.7 M605.2 207.2V212.3 M608.0 209.8V218.0 M617.6 210.3V217.6 M618.9 214.5V223.4 M622.5 220.0V226.5 M628.5 217.2V222.0 M629.9 216.3V224.5 M631.6 214.3V225.8 M635.0 221.3V230.5 M636.7 225.4V231.3 M641.7 218.6V226.4 M648.7 230.9V238.2 M661.3 220.4V228.4 M668.9 227.5V232.2 M674.5 232.6V239.1 M676.3 231.8V237.3 M681.5 230.7V234.9 M683.2 231.0V242.4 M686.4 239.2V248.3 M692.7 243.7V249.4 M695.5 244.3V251.5 M698.2 244.8V251.0 M709.1 229.5V240.2 M716.5 232.9V238.9 M722.8 228.8V236.5 M736.2 218.4V230.4 M739.5 224.9V234.3 M741.1 231.0V236.8 M748.2 238.2V244.9 M778.8 197.4V204.1 M780.2 193.6V204.1 M782.9 187.1V194.5 M784.3 181.2V193.1 M789.2 180.7V192.2 M790.6 186.9V195.7 M794.7 192.6V200.3 M796.1 197.4V205.7 M797.4 200.0V212.1 M798.8 206.4V217.9 M800.2 213.8V222.9 M801.5 216.9V231.2 M816.6 209.2V215.4 M818.2 210.6V220.2 M819.8 213.6V225.8 M821.2 218.9V232.5 M829.4 222.0V225.9 M831.2 224.9V229.8 M834.6 234.2V238.5 M836.2 234.2V243.2 M841.3 237.1V246.0 M849.4 190.7V206.9 M851.0 202.6V210.6 M852.7 203.7V212.6 M861.3 213.1V220.7 M864.7 217.1V224.1 M866.3 219.6V229.9 M868.0 223.0V230.9 M878.6 222.1V225.0 M884.1 221.1V225.2 M889.3 214.1V221.7 M895.0 215.3V223.5 M896.4 217.9V230.4 M898.0 227.8V237.6 M899.7 230.3V240.2 M903.2 238.5V246.1 M906.8 243.0V250.4 M908.4 248.4V252.7 M916.9 232.6V237.7 M918.7 231.7V237.6 M923.7 233.6V241.5 M925.4 234.9V241.2 M927.0 233.6V238.9 M932.3 226.8V234.7 M937.4 224.1V232.4 M939.0 230.7V236.7 M940.7 232.2V239.7 M947.0 244.5V250.6 M952.4 242.5V250.7 M953.8 244.5V249.5 M957.9 247.2V254.2 M962.0 247.6V255.0 M964.7 251.5V258.8 M970.2 255.8V263.2 M971.6 259.0V264.2 M974.3 260.8V269.8 M982.5 264.8V272.5 M992.1 259.1V262.0 M995.2 251.2V259.0" stroke="#0a84f2" stroke-width="1.7" fill="none"/>
<path d="M196.8 325.5V339.5 M199.0 311.4V330.4 M200.4 310.3V317.7 M201.7 298.9V311.9 M204.5 294.3V303.4 M211.9 308.8V313.4 M213.2 304.1V313.9 M214.6 300.0V305.7 M217.3 274.7V294.0 M219.2 255.5V278.7 M224.2 266.5V279.8 M238.7 268.8V274.5 M244.1 285.7V293.4 M245.5 281.8V291.4 M248.2 271.8V279.3 M258.3 284.4V295.6 M259.7 282.8V286.9 M263.0 271.0V280.6 M265.7 267.3V273.3 M269.3 265.4V274.5 M270.6 267.5V271.8 M275.6 262.4V271.7 M276.9 257.3V265.7 M278.3 253.3V260.6 M279.7 246.0V259.6 M281.0 239.2V250.7 M283.8 223.2V235.5 M285.1 217.4V228.7 M286.5 210.0V222.0 M287.9 212.5V225.6 M296.6 198.5V205.9 M299.3 198.9V210.3 M300.7 207.1V215.9 M307.5 226.3V239.9 M311.6 208.0V223.9 M324.5 308.3V320.2 M325.9 300.2V311.7 M338.2 334.9V345.2 M342.3 329.8V344.0 M343.6 326.6V333.1 M346.4 315.0V329.8 M347.7 305.3V319.3 M354.6 304.6V313.8 M355.9 299.5V312.3 M360.3 299.1V315.2 M366.5 334.1V345.2 M369.5 321.8V330.4 M372.6 317.5V328.7 M375.3 326.8V333.5 M382.2 321.2V329.0 M383.8 312.5V326.0 M386.8 299.1V314.1 M388.2 288.1V302.8 M396.0 265.2V273.3 M408.7 269.5V279.0 M410.1 271.0V275.6 M426.1 259.1V265.8 M427.8 253.2V264.2 M434.7 255.3V264.0 M436.0 256.7V263.3 M437.4 254.9V261.6 M447.9 266.5V272.9 M449.7 258.1V269.2 M451.1 256.5V262.9 M456.9 269.9V284.0 M458.7 278.9V286.9 M460.4 280.2V285.7 M462.0 275.6V285.6 M464.7 276.0V281.6 M468.0 273.8V284.0 M469.8 271.0V279.8 M471.6 265.1V274.3 M473.3 258.8V269.1 M475.1 255.8V263.1 M476.8 247.4V259.8 M478.4 239.2V250.4 M481.7 222.8V239.0 M487.0 235.2V242.3 M488.8 232.8V239.9 M495.4 224.2V232.7 M496.7 222.3V228.5 M504.6 233.3V242.2 M512.6 230.1V241.4 M515.6 228.0V235.4 M516.9 223.9V229.2 M530.5 223.1V228.5 M535.0 212.2V223.0 M536.4 205.3V217.7 M537.7 200.9V211.2 M539.9 190.9V204.1 M543.7 206.5V218.5 M545.1 215.0V218.2 M548.7 218.9V226.7 M551.9 216.3V221.6 M556.9 208.4V227.2 M558.2 200.3V210.8 M559.6 198.7V205.8 M561.5 194.4V204.2 M571.9 189.5V197.9 M573.3 186.5V196.6 M582.0 201.9V211.4 M594.0 215.2V218.4 M597.3 200.7V210.6 M606.6 209.3V212.1 M612.6 212.7V219.2 M614.4 209.1V222.2 M624.1 216.7V225.6 M638.3 219.7V228.1 M643.5 222.6V228.2 M645.3 225.6V233.6 M653.6 223.6V238.1 M657.2 219.8V228.7 M658.6 218.6V222.7 M659.9 219.6V222.3 M662.7 224.0V229.8 M670.9 230.4V234.3 M678.1 231.1V237.4 M679.9 231.6V236.2 M696.8 244.6V251.2 M700.9 247.1V250.9 M703.9 245.8V250.3 M705.6 238.8V249.9 M707.4 232.5V242.4 M712.7 228.1V234.3 M718.3 231.5V238.1 M721.4 231.9V235.3 M726.9 228.5V236.4 M730.0 224.4V232.2 M734.6 217.4V225.2 M746.4 234.8V241.0 M751.5 236.3V245.4 M753.1 231.2V242.0 M756.6 233.2V238.9 M758.3 226.1V237.1 M760.1 218.7V231.5 M763.5 217.8V223.1 M766.8 215.1V221.9 M768.5 210.8V218.2 M770.2 204.4V212.6 M772.0 204.3V208.6 M775.6 200.0V205.8 M781.6 193.4V195.9 M786.5 175.3V183.2 M787.9 173.0V181.7 M802.9 227.8V232.0 M804.5 222.7V231.8 M806.2 219.0V227.0 M807.8 216.0V224.1 M811.2 213.9V219.0 M813.0 209.1V218.0 M822.6 228.8V233.2 M824.2 227.8V233.4 M827.6 220.9V231.2 M833.0 228.3V237.4 M839.5 237.5V241.7 M843.1 239.8V249.7 M845.0 203.2V210.8 M847.2 188.7V206.5 M855.9 204.1V210.5 M859.5 206.9V218.3 M869.6 224.8V228.6 M871.4 222.1V228.2 M887.6 218.2V225.6 M893.7 211.8V220.9 M910.1 244.4V249.7 M911.7 240.0V248.6 M913.3 235.0V243.1 M922.1 234.9V242.0 M928.8 230.1V236.8 M934.1 227.3V232.2 M942.5 236.3V246.2 M949.7 247.7V250.2 M951.1 242.2V252.6 M955.2 246.4V253.2 M960.6 248.4V252.7 M966.1 252.4V261.7 M967.5 256.8V260.3 M968.8 255.2V261.6 M972.9 258.8V264.8 M975.7 265.0V270.4 M983.9 268.6V272.8 M985.2 268.9V272.4 M990.7 257.0V270.7 M993.4 252.9V261.2 M997.0 249.8V256.4" stroke="#f80000" stroke-width="1.7" fill="none"/>
<path d="M1000.0 256.3v3.0 M1004.2 251.6h2.6 M1006.8 248.9v3.0 M1012.3 253.5v6.0 M1021.9 237.7v3.0 M1023.3 237.2h2.6 M1026.0 235.4v6.0 M1027.3 235.4V238.9 M1030.6 230.2V238.2 M1037.9 213.5v4.5 M1042.4 211.4h2.6 M1054.7 197.7V204.8 M1065.6 172.6v4.5 M1069.2 175.0h2.6 M1073.1 172.9h2.6 M1074.8 173.0h2.6 M1082.0 171.9v6.0 M1082.4 172.7h2.6 M1092.1 162.8v6.0 M1093.9 162.2v3.0 M1099.4 175.8h2.6 M1107.7 181.8v6.0 M1114.4 175.1V181.8 M1121.1 167.0v3.0 M1125.8 172.4v3.0 M1127.1 172.7v6.0 M1128.5 172.2v6.0 M1129.9 171.4v3.0 M1137.0 168.9h2.6 M1140.0 167.4V175.1 M1142.2 174.8h2.6 M1145.3 173.2v3.0 M1147.4 180.3h2.6 M1160.0 170.2h2.6 M1165.5 160.8h2.6 M1168.1 157.3V164.1 M1169.5 156.9v3.0 M1170.9 156.4V158.8 M1176.4 144.0h2.6 M1182.1 149.8v3.0 M1185.5 155.0v3.0 M1190.8 154.1v3.0 M1192.5 150.9V158.3 M1205.9 125.3V130.1 M1220.1 137.2v3.0 M1224.0 147.4h2.6 M1250.4 126.8V135.4 M1250.8 129.4h2.6 M1264.1 117.5V123.2 M1265.7 118.3v6.0 M1276.1 116.3V120.6 M1306.7 143.2V150.7 M1311.7 135.5h2.6 M1327.3 158.4h2.6 M1333.5 145.3v4.5 M1343.4 139.7v4.5 M1349.0 131.8h2.6 M1357.0 135.6v4.5 M1357.4 135.7h2.6 M1360.4 132.6V134.9 M1410.1 153.9v3.0 M1415.5 160.9v3.0 M1425.4 141.3v3.0 M1431.9 144.9v6.0 M1435.0 145.3h2.6 M1450.3 166.4h2.6 M1455.5 172.4h2.6 M1458.6 171.7V176.9 M1465.3 165.3V172.8 M1478.2 191.9V201.1 M1478.2 194.4h2.6 M1488.8 166.2V172.7 M1490.6 168.9v3.0 M1495.9 171.9v3.0 M1500.6 165.9v4.5 M1512.9 146.9V152.5 M1517.8 146.7v3.0 M1519.7 147.8v3.0 M1525.2 150.3V156.9 M1529.3 157.1V162.9 M1529.3 161.7h2.6 M1533.4 162.0V167.2 M1534.8 160.2h2.6 M1541.9 157.6h2.6 M1545.2 157.6h2.6 M1548.1 156.7v4.5 M1548.5 158.2h2.6 M1551.1 156.7v4.5 M1556.6 155.3v3.0 M1566.3 145.9h2.6 M1572.8 149.0h2.6 M1577.4 147.2V151.7 M1577.7 148.8h2.6 M1593.2 115.6v4.5 M1594.9 115.4V123.0 M1596.3 115.0h2.6 M1600.4 104.3V110.2" stroke="#f6f264" stroke-width="1.7" fill="none"/>
<path d="M1002.7 248.9V258.8 M1009.6 248.2V255.5 M1010.9 251.5V255.5 M1020.5 237.1V245.1 M1039.6 213.5V219.4 M1061.5 183.4V189.8 M1077.9 168.4V175.7 M1080.6 166.1V174.2 M1097.3 167.3V172.5 M1102.5 173.8V182.1 M1106.1 180.5V184.8 M1109.3 179.1V184.1 M1111.0 179.7V181.4 M1118.0 165.8V174.8 M1122.5 165.3V171.6 M1133.4 165.8V175.4 M1136.7 164.2V170.1 M1147.1 171.9V180.5 M1151.7 174.2V182.6 M1153.1 177.4V179.9 M1172.6 149.4V160.0 M1179.1 144.2V152.8 M1180.4 147.6V152.1 M1183.7 150.4V157.6 M1187.3 154.4V161.5 M1199.2 137.7V147.7 M1200.9 133.5V142.2 M1207.2 123.5V127.6 M1211.6 125.0V140.1 M1213.2 137.9V144.6 M1216.5 138.0V143.3 M1218.3 136.8V141.1 M1229.1 141.8V162.3 M1231.0 157.3V176.0 M1232.4 168.4V173.1 M1240.0 145.1V151.3 M1241.7 144.9V151.7 M1243.3 147.1V151.7 M1248.8 129.2V140.7 M1253.8 129.1V134.4 M1267.5 117.5V123.7 M1271.0 122.3V125.3 M1277.5 116.7V120.8 M1280.5 117.3V129.6 M1284.9 129.8V141.1 M1287.0 138.2V149.8 M1297.2 124.9V134.1 M1298.5 132.1V136.3 M1301.3 137.6V147.4 M1305.4 145.1V154.0 M1308.1 142.5V146.2 M1317.1 126.0V139.6 M1318.5 134.3V141.8 M1325.3 159.4V166.2 M1334.9 143.2V151.8 M1336.7 146.0V152.1 M1338.4 148.5V155.0 M1340.1 145.0V154.9 M1353.7 125.1V132.8 M1355.4 130.2V140.9 M1372.3 121.6V126.7 M1373.7 122.9V129.2 M1376.8 126.0V139.9 M1378.6 133.4V144.4 M1383.8 138.7V152.9 M1386.8 151.8V161.1 M1388.2 158.3V162.4 M1398.3 130.7V138.3 M1404.6 123.6V136.7 M1406.0 133.5V147.7 M1408.7 146.6V155.9 M1411.4 152.4V161.5 M1412.8 157.4V164.3 M1422.1 141.7V150.2 M1427.0 137.2V145.8 M1428.8 139.6V144.0 M1430.6 139.8V146.5 M1434.7 141.0V147.7 M1437.9 144.8V149.7 M1439.7 147.1V152.0 M1441.5 151.5V158.3 M1443.3 152.1V161.2 M1445.1 157.5V164.7 M1446.7 159.3V165.7 M1453.3 163.4V172.9 M1463.7 170.1V176.7 M1468.7 167.6V177.8 M1472.3 172.4V178.0 M1476.8 190.2V201.1 M1480.9 184.1V195.9 M1492.4 168.1V176.4 M1505.1 159.2V166.6 M1516.0 144.6V150.4 M1527.9 151.0V161.0 M1532.0 161.1V166.8 M1541.6 154.6V160.4 M1553.9 156.0V162.7 M1558.0 152.2V157.2 M1564.8 142.3V147.7 M1568.9 143.8V149.8 M1570.7 147.0V152.4 M1575.8 147.2V152.5 M1580.8 148.1V152.3 M1591.6 113.8V136.8 M1601.7 96.6V106.2 M1603.1 87.9V99.0 M1607.5 95.0V109.4 M1609.1 107.4V114.5" stroke="#0a84f2" stroke-width="1.7" fill="none"/>
<path d="M1001.4 253.4V260.2 M1004.1 247.9V252.5 M1013.7 250.7V257.6 M1015.0 245.6V252.2 M1017.8 243.8V250.9 M1019.1 241.5V248.0 M1023.2 234.7V239.9 M1029.0 233.2V240.7 M1032.0 229.0V236.3 M1034.7 218.3V231.2 M1036.1 213.3V222.4 M1042.4 211.1V221.5 M1045.1 208.3V213.4 M1046.5 202.7V211.4 M1049.6 202.5V211.0 M1051.4 204.7V209.0 M1053.0 200.2V210.6 M1056.3 193.6V200.3 M1058.0 188.6V196.0 M1059.7 184.9V190.1 M1064.2 171.6V186.6 M1067.0 167.1V176.3 M1068.8 170.3V177.2 M1072.4 171.7V175.9 M1090.5 162.4V175.2 M1095.7 160.7V170.8 M1099.0 167.0V177.1 M1104.3 177.3V183.2 M1116.2 172.2V181.6 M1124.1 168.0V174.3 M1135.0 165.9V168.5 M1141.7 169.0V177.8 M1150.4 176.8V182.3 M1155.8 173.2V180.3 M1157.2 171.7V178.5 M1158.6 170.6V174.7 M1159.9 167.0V173.5 M1162.7 166.2V171.1 M1165.4 158.5V168.8 M1174.4 144.4V151.8 M1176.1 141.3V148.6 M1189.0 155.4V164.1 M1195.7 146.7V155.5 M1202.7 130.6V136.7 M1204.5 126.1V134.1 M1221.8 136.6V146.4 M1223.6 142.4V148.4 M1226.9 142.1V150.1 M1233.7 166.0V170.0 M1235.1 159.0V169.4 M1236.5 148.7V162.5 M1244.7 142.8V151.3 M1247.4 135.3V144.4 M1255.6 131.5V136.1 M1257.4 127.6V136.3 M1259.2 124.2V131.0 M1260.8 123.7V127.9 M1262.4 121.0V128.0 M1274.5 118.4V126.2 M1282.1 126.6V132.6 M1288.4 139.2V150.1 M1289.8 136.8V141.3 M1291.4 134.0V137.5 M1293.1 130.7V135.1 M1294.4 126.7V131.1 M1299.9 133.7V139.8 M1304.0 145.2V153.6 M1309.5 139.9V146.7 M1311.2 134.3V142.8 M1314.4 132.0V135.9 M1315.7 128.8V133.5 M1320.3 139.8V149.5 M1323.7 148.6V163.0 M1327.0 157.1V164.4 M1330.4 148.9V159.3 M1332.1 143.8V153.8 M1341.7 140.5V151.0 M1345.0 136.9V141.1 M1348.6 131.2V139.5 M1352.1 125.3V134.7 M1364.0 122.6V133.8 M1365.8 120.1V129.2 M1367.4 113.9V123.1 M1370.7 113.5V123.3 M1385.5 149.9V157.0 M1389.6 154.0V161.9 M1390.9 150.0V157.3 M1392.3 150.3V154.1 M1393.7 143.5V151.2 M1396.9 132.5V146.3 M1399.7 126.1V133.8 M1401.4 123.7V129.2 M1407.3 141.3V151.9 M1416.9 154.4V163.4 M1418.7 150.5V155.3 M1420.4 144.5V151.6 M1423.7 140.4V146.3 M1433.3 141.0V147.7 M1448.3 158.8V165.1 M1450.0 157.6V169.0 M1462.0 173.4V178.1 M1470.5 171.6V177.1 M1474.1 177.8V186.5 M1475.4 183.3V193.6 M1482.3 177.1V188.0 M1485.5 166.2V183.2 M1494.1 171.8V179.2 M1499.2 164.7V176.5 M1501.9 163.0V170.2 M1506.9 155.5V160.7 M1508.5 153.6V159.5 M1511.5 150.5V155.8 M1514.2 143.9V152.4 M1521.6 148.4V151.9 M1523.4 146.2V152.1 M1534.7 159.5V165.3 M1555.2 154.9V164.6 M1559.8 144.1V153.5 M1563.2 140.5V148.3 M1582.6 149.0V151.1 M1584.0 143.9V152.5 M1585.3 134.6V146.8 M1596.3 114.6V122.9 M1599.0 107.1V116.5 M1604.5 90.7V98.2" stroke="#f80000" stroke-width="1.7" fill="none"/>
<path d="M1616.2 115.5v6.0 M1618.2 114.7h2.6 M1623.6 110.0v3.0 M1625.0 109.4v4.5 M1626.4 110.2h2.6 M1629.1 108.4v6.0 M1631.8 108.4v3.0 M1633.2 108.7v3.0 M1642.8 115.7h2.6 M1644.4 115.9h2.6 M1656.4 130.2V133.4 M1665.8 135.4v3.0 M1670.1 134.2v3.0 M1674.2 128.7v3.0 M1674.2 129.4h2.6 M1679.7 131.0h2.6 M1690.6 129.7h2.6 M1694.7 128.9v4.5 M1705.6 148.8V151.3 M1705.7 151.1h2.6 M1708.3 150.4v4.5 M1711.1 151.7v3.0 M1712.4 152.5v4.5 M1715.2 153.0v4.5 M1716.5 151.0V154.6 M1716.6 150.4h2.6 M1726.1 141.5v3.0 M1732.0 137.3v3.0 M1752.1 169.9h2.6 M1761.6 171.1v6.0 M1763.0 170.2v3.0 M1775.7 164.7v4.5 M1783.5 167.0v3.0 M1784.9 167.7v6.0 M1784.9 168.7h2.6 M1786.3 168.6h2.6 M1787.7 168.6h2.6 M1799.9 165.3v3.0 M1801.3 165.0v3.0 M1801.4 166.4h2.6 M1804.0 165.8V168.9 M1805.4 167.3v6.0 M1805.5 168.8h2.6 M1809.5 168.4v6.0 M1809.6 170.6h2.6 M1816.3 170.2V174.2 M1820.5 176.2h2.6 M1823.2 176.3h2.6 M1826.0 175.9h2.6 M1838.3 177.2h2.6 M1842.4 175.7h2.6 M1843.7 177.0h2.6 M1845.1 178.0h2.6 M1858.7 178.1v3.0 M1868.3 171.8h2.6 M1869.7 171.9h2.6 M1873.7 172.5v4.5 M1884.5 162.4h2.6 M1889.0 161.4V164.3 M1900.7 161.1V164.4" stroke="#f6f264" stroke-width="1.7" fill="none"/>
<path d="M1635.9 109.6V113.5 M1641.4 112.7V118.7 M1647.4 115.8V117.3 M1652.7 116.3V128.1 M1654.5 127.4V131.4 M1661.2 132.5V134.9 M1662.7 133.9V135.8 M1664.2 135.0V137.2 M1679.6 128.7V130.8 M1682.4 131.0V133.0 M1685.5 132.3V137.5 M1687.3 136.2V138.9 M1698.2 130.6V141.9 M1702.9 141.0V149.2 M1713.8 154.0V155.4 M1735.4 138.5V146.6 M1737.0 146.1V150.6 M1740.3 149.4V154.0 M1742.1 153.9V157.1 M1743.9 156.2V158.2 M1745.7 157.9V160.4 M1750.7 159.6V167.8 M1752.1 167.1V170.2 M1756.2 170.1V172.9 M1760.3 172.1V173.6 M1767.1 171.0V173.8 M1770.4 172.9V176.5 M1780.8 164.3V168.2 M1808.1 167.8V169.7 M1819.1 172.8V175.4 M1820.4 174.2V175.9 M1831.4 175.3V179.5 M1854.6 177.9V183.8 M1872.4 172.2V174.1 M1892.3 163.9V165.6" stroke="#0a84f2" stroke-width="1.7" fill="none"/>
<path d="M1617.9 114.8V117.1 M1622.2 110.9V114.9 M1642.7 115.3V118.7 M1672.8 130.6V134.9 M1688.9 133.2V139.6 M1690.6 129.0V134.3 M1723.4 143.7V150.1 M1724.7 142.9V144.1 M1730.2 137.8V143.6 M1772.2 170.6V176.0 M1773.9 166.0V171.8 M1777.5 164.4V166.7 M1793.1 167.1V168.8 M1797.2 166.5V168.0 M1823.2 175.3V177.1 M1825.9 175.6V177.0 M1838.2 176.8V179.4 M1842.3 174.3V177.7 M1857.3 179.3V183.8 M1861.4 174.3V179.4 M1865.5 171.9V175.0 M1875.4 171.2V175.2 M1880.6 162.4V171.6 M1897.3 163.6V166.0" stroke="#f80000" stroke-width="1.7" fill="none"/>
<path d="M12.6 632.9h3.0" stroke="#f6f264" stroke-width="1.8"/>
<path d="M14.1 640.4h3.0" stroke="#f6f264" stroke-width="1.8"/>
<path d="M20.9 638.4v10.0" stroke="#0a84f2" stroke-width="2"/>
<path d="M41.3 632.9h3.0" stroke="#f6f264" stroke-width="1.8"/>
<path d="M44.9 640.4h3.0" stroke="#f6f264" stroke-width="1.8"/>
<path d="M64.9 637.4h3.0" stroke="#f6f264" stroke-width="1.8"/>
<path d="M66.7 643.4h4.5" stroke="#f6f264" stroke-width="1.8"/>
<path d="M73.3 646.4h3.0" stroke="#f6f264" stroke-width="1.8"/>
<path d="M88.3 646.4h2.5" stroke="#f6f264" stroke-width="1.8"/>
<path d="M94.3 646.4h4.5" stroke="#f6f264" stroke-width="1.8"/>
<path d="M115.2 649.4h4.5" stroke="#f6f264" stroke-width="1.8"/>
<path d="M117.3 652.4h2.5" stroke="#f6f264" stroke-width="1.8"/>
<path d="M125.1 644.5v5.0" stroke="#f80000" stroke-width="2"/>
<path d="M137.6 655.9h2.5" stroke="#f6f264" stroke-width="1.8"/>
<path d="M143.6 655.9h2.5" stroke="#f6f264" stroke-width="1.8"/>
<path d="M156.2 649.4h4.5" stroke="#f6f264" stroke-width="1.8"/>
<path d="M162.5 646.4h4.5" stroke="#f6f264" stroke-width="1.8"/>
<path d="M172.0 649.4h2.5" stroke="#f6f264" stroke-width="1.8"/>
<path d="M175.0 647.0h3.0" stroke="#f6f264" stroke-width="1.8"/>
<path d="M183.1 643.9v8.0" stroke="#0a84f2" stroke-width="2"/>
<path d="M193.0 679.3V710.7" stroke="#f80000" stroke-width="2"/>
<path d="M195.1 685.3V700.2" stroke="#f80000" stroke-width="2"/>
<path d="M197.5 667.3V685.3" stroke="#f80000" stroke-width="2"/>
<path d="M199.0 540.1V673.3" stroke="#f80000" stroke-width="2"/>
<path d="M201.1 568.6V598.5" stroke="#0a84f2" stroke-width="2"/>
<path d="M203.5 595.5V619.4" stroke="#0a84f2" stroke-width="2"/>
<path d="M205.9 619.4V631.4" stroke="#0a84f2" stroke-width="2"/>
<path d="M208.0 625.4V643.4" stroke="#0a84f2" stroke-width="2"/>
<path d="M210.4 622.4V643.4" stroke="#f80000" stroke-width="2"/>
<path d="M213.0 616.4V625.4" stroke="#f80000" stroke-width="2"/>
<path d="M215.4 607.5V619.4" stroke="#f80000" stroke-width="2"/>
<path d="M217.8 583.5V610.5" stroke="#f80000" stroke-width="2"/>
<path d="M219.3 547.6V589.5" stroke="#f80000" stroke-width="2"/>
<path d="M221.4 543.1V553.6" stroke="#0a84f2" stroke-width="2"/>
<path d="M224.4 543.1V562.6" stroke="#f80000" stroke-width="2"/>
<path d="M226.5 559.6V568.6" stroke="#0a84f2" stroke-width="2"/>
<path d="M228.9 562.6V571.6" stroke="#f6f264" stroke-width="2"/>
<path d="M230.4 565.6V571.6" stroke="#0a84f2" stroke-width="2"/>
<path d="M233.4 577.5V588.0" stroke="#0a84f2" stroke-width="2"/>
<path d="M236.4 579.0V585.0" stroke="#f6f264" stroke-width="2"/>
<path d="M239.4 576.1V583.5" stroke="#f80000" stroke-width="2"/>
<path d="M241.8 589.5V604.5" stroke="#0a84f2" stroke-width="2"/>
<path d="M243.9 601.5V609.0" stroke="#f80000" stroke-width="2"/>
<path d="M246.9 600.0V607.5" stroke="#0a84f2" stroke-width="2"/>
<path d="M249.9 604.5V613.5" stroke="#0a84f2" stroke-width="2"/>
<path d="M253.7 613.5V620.9" stroke="#0a84f2" stroke-width="2"/>
<path d="M256.7 600.0V613.5" stroke="#f80000" stroke-width="2"/>
<path d="M258.8 607.5V616.4" stroke="#f6f264" stroke-width="2"/>
<path d="M260.9 607.5V613.5" stroke="#0a84f2" stroke-width="2"/>
<path d="M263.9 598.5V601.5" stroke="#f80000" stroke-width="2"/>
<path d="M268.7 588.0V594.0" stroke="#0a84f2" stroke-width="2"/>
<path d="M273.8 591.0V597.0" stroke="#f80000" stroke-width="2"/>
<path d="M273.8 595.5h3" stroke="#f6f264" stroke-width="1.8"/>
<path d="M278.3 589.5V595.5" stroke="#f80000" stroke-width="2"/>
<path d="M281.3 580.5V586.5" stroke="#f6f264" stroke-width="2"/>
<path d="M284.3 558.1V571.6" stroke="#f80000" stroke-width="2"/>
<path d="M287.3 546.1V559.6" stroke="#f80000" stroke-width="2"/>
<path d="M289.6 553.6V559.6" stroke="#0a84f2" stroke-width="2"/>
<path d="M291.7 562.6V571.6" stroke="#f6f264" stroke-width="2"/>
<path d="M294.1 561.1V565.6" stroke="#0a84f2" stroke-width="2"/>
<path d="M297.7 567.1h3" stroke="#f6f264" stroke-width="1.8"/>
<path d="M302.2 568.6h3" stroke="#f6f264" stroke-width="1.8"/>
<path d="M308.2 558.1V568.6" stroke="#f80000" stroke-width="2"/>
<path d="M309.7 571.6V577.5" stroke="#f6f264" stroke-width="2"/>
<path d="M311.2 558.1V565.6" stroke="#f80000" stroke-width="2"/>
<path d="M313.6 565.6V574.6" stroke="#0a84f2" stroke-width="2"/>
<path d="M316.6 580.5V586.5" stroke="#0a84f2" stroke-width="2"/>
<path d="M317.2 592.5h3" stroke="#f6f264" stroke-width="1.8"/>
<path d="M321.7 592.5V612.0" stroke="#0a84f2" stroke-width="2"/>
<path d="M324.7 595.5V607.5" stroke="#f6f264" stroke-width="2"/>
<path d="M327.6 591.0V598.5" stroke="#f80000" stroke-width="2"/>
<path d="M331.5 592.5V597.0" stroke="#0a84f2" stroke-width="2"/>
<path d="M333.6 600.0V609.0" stroke="#f6f264" stroke-width="2"/>
<path d="M337.5 598.5V604.5" stroke="#0a84f2" stroke-width="2"/>
<path d="M340.5 595.5V601.5" stroke="#f80000" stroke-width="2"/>
<path d="M341.7 601.5V612.0" stroke="#0a84f2" stroke-width="2"/>
<path d="M342.0 594.0h3" stroke="#f6f264" stroke-width="1.8"/>
<path d="M346.5 596.1V597.9" stroke="#0a84f2" stroke-width="2"/>
<path d="M351.6 591.0h3" stroke="#f6f264" stroke-width="1.8"/>
<path d="M356.1 580.5V588.0" stroke="#f6f264" stroke-width="2"/>
<path d="M357.6 583.5h3" stroke="#f6f264" stroke-width="1.8"/>
<path d="M362.1 597.0h3" stroke="#f6f264" stroke-width="1.8"/>
<path d="M363.6 600.0h3" stroke="#f6f264" stroke-width="1.8"/>
<path d="M372.5 586.5h3" stroke="#f6f264" stroke-width="1.8"/>
<path d="M376.4 573.1V577.5" stroke="#f80000" stroke-width="2"/>
<path d="M378.5 574.6h3" stroke="#f6f264" stroke-width="1.8"/>
<path d="M384.5 566.2V568.0" stroke="#f80000" stroke-width="2"/>
<path d="M387.5 558.1V562.6" stroke="#f80000" stroke-width="2"/>
<path d="M390.5 547.6V553.6" stroke="#f80000" stroke-width="2"/>
<path d="M392.6 540.1V546.1" stroke="#f6f264" stroke-width="2"/>
<path d="M395.0 531.2V535.7" stroke="#f80000" stroke-width="2"/>
<path d="M398.0 513.2V525.2" stroke="#f80000" stroke-width="2"/>
<path d="M401.0 513.2V522.2" stroke="#0a84f2" stroke-width="2"/>
<path d="M403.4 516.2V522.2" stroke="#f6f264" stroke-width="2"/>
<path d="M405.4 517.7V523.7" stroke="#f80000" stroke-width="2"/>
<path d="M406.9 520.7h3" stroke="#f6f264" stroke-width="1.8"/>
<path d="M414.4 526.7V534.2" stroke="#f6f264" stroke-width="2"/>
<path d="M415.9 540.1V544.6" stroke="#0a84f2" stroke-width="2"/>
<path d="M418.3 504.2V535.7" stroke="#f80000" stroke-width="2"/>
<path d="M420.4 504.2V511.7" stroke="#0a84f2" stroke-width="2"/>
<path d="M423.4 508.7V514.7" stroke="#f80000" stroke-width="2"/>
<path d="M425.5 508.7V514.7" stroke="#0a84f2" stroke-width="2"/>
<path d="M427.9 496.8V504.2" stroke="#f80000" stroke-width="2"/>
<path d="M430.0 496.8V504.2" stroke="#0a84f2" stroke-width="2"/>
<path d="M432.4 504.2V510.2" stroke="#f80000" stroke-width="2"/>
<path d="M434.5 502.7V508.7" stroke="#0a84f2" stroke-width="2"/>
<path d="M435.4 504.2h3" stroke="#f6f264" stroke-width="1.8"/>
<path d="M439.3 496.8V504.2" stroke="#f80000" stroke-width="2"/>
<path d="M439.9 504.2h3" stroke="#f6f264" stroke-width="1.8"/>
<path d="M443.4 507.2V511.7" stroke="#f80000" stroke-width="2"/>
<path d="M445.8 513.2h3" stroke="#f6f264" stroke-width="1.8"/>
<path d="M451.2 513.2V522.2" stroke="#0a84f2" stroke-width="2"/>
<path d="M453.3 520.7V529.7" stroke="#0a84f2" stroke-width="2"/>
<path d="M456.3 522.2V528.2" stroke="#f80000" stroke-width="2"/>
<path d="M459.3 517.7V523.7" stroke="#f80000" stroke-width="2"/>
<path d="M462.3 510.2V519.2" stroke="#f80000" stroke-width="2"/>
<path d="M465.3 507.2V510.2" stroke="#0a84f2" stroke-width="2"/>
<path d="M468.3 496.8V504.2" stroke="#f80000" stroke-width="2"/>
<path d="M471.3 493.8V499.8" stroke="#f80000" stroke-width="2"/>
<path d="M473.4 487.8V493.8" stroke="#0a84f2" stroke-width="2"/>
<path d="M475.8 474.3V486.3" stroke="#f80000" stroke-width="2"/>
<path d="M478.8 456.4V477.3" stroke="#0a84f2" stroke-width="2"/>
<path d="M480.2 478.8h3" stroke="#f6f264" stroke-width="1.8"/>
<path d="M486.2 480.3V487.8" stroke="#0a84f2" stroke-width="2"/>
<path d="M489.2 486.3h3" stroke="#f6f264" stroke-width="1.8"/>
<path d="M498.2 486.9V488.7" stroke="#0a84f2" stroke-width="2"/>
<path d="M501.5 486.1v4.5 M503.0 486.5v6.0 M507.5 484.6v6.0 M507.7 487.2h2.6 M539.1 489.0h2.6 M541.9 488.5v4.5 M548.1 505.9h2.6 M549.6 505.7h2.6 M558.3 498.6v6.0 M568.8 483.9v6.0 M570.5 485.1h2.6 M578.2 491.2v4.5 M578.9 492.7h2.6 M599.3 475.1V480.8 M610.5 508.5h2.6 M612.2 508.4h2.6 M616.7 507.0V513.3 M622.7 510.6v6.0 M624.2 508.8v6.0 M628.7 499.9v3.0 M630.4 503.6h2.6 M634.6 504.4v4.5 M634.8 507.0h2.6 M651.1 498.1V502.8 M651.3 501.5h2.6 M657.1 492.6V497.3 M658.8 494.1h2.6 M661.6 493.4v6.0 M664.6 492.5v3.0 M666.1 492.0v3.0 M673.7 492.9h2.6 M679.5 494.4v4.5 M681.0 496.3V500.7 M682.5 497.5v4.5 M693.0 499.5v3.0 M694.5 499.4v3.0 M696.0 499.7v4.5 M699.0 499.2v4.5 M700.5 499.1v3.0 M702.0 497.8v3.0 M703.5 497.4v6.0 M715.6 488.5h2.6 M722.9 486.4v3.0 M724.4 483.8V487.3 M724.6 484.9h2.6 M726.1 485.0h2.6 M731.9 481.6V485.1 M732.1 484.2h2.6 M734.9 482.5v3.0 M737.9 484.4v3.0 M740.9 483.4v6.0 M742.6 482.9h2.6 M746.9 482.3v3.0 M757.3 476.9v3.0 M759.0 474.4h2.6 M763.3 475.9v3.0 M773.8 468.8V474.7 M779.8 455.9V462.1 M791.7 429.7V433.5 M794.7 433.8v6.0 M808.2 448.7v4.5 M809.7 450.0v3.0 M819.6 472.1v3.0 M824.7 463.5V467.7 M824.9 464.5h2.6 M829.3 461.4h2.6 M832.3 460.4h2.6 M835.1 458.9V463.6 M842.3 458.3v3.0 M850.5 466.6v4.5 M854.8 463.2h2.6 M859.1 465.1V469.7 M863.6 463.1v6.0 M867.4 465.2v3.0 M869.2 465.5v3.0" stroke="#f6f264" stroke-width="1.7" fill="none"/>
<path d="M526.9 471.4V476.0 M528.4 473.6V476.8 M529.9 474.5V482.9 M531.4 479.2V485.1 M532.9 482.6V487.6 M535.9 486.2V490.2 M543.4 489.8V494.4 M547.9 491.4V506.4 M573.3 483.2V489.5 M576.3 486.2V494.1 M603.2 478.4V491.7 M608.2 489.2V508.1 M610.1 505.5V510.1 M619.7 511.1V517.1 M630.2 499.8V503.7 M633.2 503.7V506.6 M648.1 489.9V501.9 M669.1 493.1V497.9 M670.6 495.7V502.2 M678.0 491.0V496.6 M684.0 497.6V503.4 M684.9 501.1V511.5 M715.4 487.2V489.7 M718.4 486.0V490.4 M736.4 483.8V487.1 M755.8 476.7V478.9 M761.8 473.5V479.8 M772.3 466.3V470.4 M788.7 422.9V427.9 M790.2 426.5V431.2 M793.2 431.7V437.4 M800.4 430.3V440.4 M801.6 438.7V444.5 M805.2 440.9V449.4 M806.7 446.8V451.3 M811.6 450.3V456.5 M815.7 454.3V474.7 M836.6 462.3V464.4 M844.1 459.9V462.4 M846.5 465.8V477.5 M857.6 462.2V466.5 M865.5 463.8V467.3 M871.0 465.7V471.0" stroke="#0a84f2" stroke-width="1.7" fill="none"/>
<path d="M504.5 484.0V488.7 M517.8 474.7V489.2 M520.9 474.5V477.8 M523.9 471.6V476.2 M537.4 486.1V490.9 M553.9 501.0V507.2 M555.4 499.7V502.9 M559.8 497.3V502.4 M561.6 493.5V500.8 M563.4 489.6V496.2 M567.3 485.3V491.8 M583.8 482.8V494.4 M585.6 479.3V485.4 M587.4 480.2V481.7 M589.3 477.5V481.0 M591.3 473.8V480.3 M621.2 512.9V518.2 M627.2 501.0V510.2 M638.1 498.0V507.9 M640.0 489.8V500.5 M654.1 499.2V502.1 M655.6 493.9V501.1 M663.1 493.9V496.4 M672.1 495.6V500.8 M673.5 491.9V498.4 M690.0 501.2V511.4 M697.5 498.3V502.6 M708.0 490.8V499.6 M711.0 487.1V492.5 M728.9 483.6V485.9 M730.4 481.3V485.7 M739.4 484.6V487.7 M742.4 480.8V486.0 M751.9 475.7V485.6 M758.8 472.9V479.4 M764.8 473.6V479.0 M767.8 467.7V474.2 M770.8 465.7V468.7 M776.8 463.7V474.2 M778.3 459.4V465.4 M781.3 451.7V459.0 M784.3 429.4V452.5 M785.8 425.5V431.0 M787.3 423.3V427.0 M796.2 431.4V436.1 M821.4 470.5V474.5 M823.2 465.9V473.1 M827.6 461.4V466.7 M840.5 458.8V464.5 M845.3 466.2V475.3 M848.6 466.2V476.4 M854.3 461.9V469.8 M862.1 464.2V468.4" stroke="#f80000" stroke-width="1.7" fill="none"/>
<path d="M872.5 466V612" stroke="#0a84f2" stroke-width="1.8"/>
<path d="M872.7 532.7h2.6 M874.5 533.3h2.6 M890.5 569.9v6.0 M892.0 570.0v4.5 M893.5 569.2v3.0 M924.9 543.3v3.0 M926.4 542.9v6.0 M928.1 546.0h2.6 M938.4 533.3v3.0 M941.4 533.0V539.3 M941.5 537.0h2.6 M950.3 542.4v3.0 M956.5 548.9h2.6 M966.8 511.7v6.0 M970.4 507.0V513.5 M975.8 522.3v3.0 M977.5 524.6h2.6 M979.0 525.3h2.6 M983.2 525.2V529.5 M984.7 527.1v3.0 M987.7 532.1v6.0 M995.2 524.3V530.3 M996.7 524.0v6.0" stroke="#f6f264" stroke-width="1.7" fill="none"/>
<path d="M877.6 532.3V536.8 M879.1 535.4V545.1 M880.6 541.6V551.9 M882.6 548.7V554.0 M884.5 553.0V558.7 M886.0 556.0V562.8 M887.5 560.5V571.1 M889.0 569.8V572.0 M895.4 570.0V576.5 M897.4 574.0V579.6 M898.9 576.1V585.8 M900.4 581.8V589.5 M923.4 541.1V546.5 M927.9 542.9V548.3 M930.9 543.8V549.1 M944.3 536.7V542.0 M947.3 538.0V544.9 M951.8 543.1V548.6 M954.8 542.7V546.2 M956.3 545.1V549.5 M972.3 508.1V516.1 M974.3 514.5V524.0 M986.2 528.1V534.1" stroke="#0a84f2" stroke-width="1.7" fill="none"/>
<path d="M901.9 585.1V590.3 M908.1 572.9V587.2 M911.7 562.3V576.7 M913.5 559.3V565.3 M915.0 550.2V561.0 M920.4 543.1V552.0 M932.4 542.5V548.5 M933.9 537.9V544.9 M935.4 535.9V541.3 M936.9 534.9V539.2 M953.3 544.1V547.8 M959.3 541.0V549.3 M960.8 535.3V543.2 M963.2 521.6V537.7 M965.3 512.1V525.8 M968.3 511.5V515.4 M990.7 530.0V535.2 M992.2 528.7V532.1 M993.7 526.8V530.4" stroke="#f80000" stroke-width="1.7" fill="none"/>
<path d="M1001.5 523.7h2.5" stroke="#f6f264" stroke-width="1.8"/>
<path d="M1003.9 526.1h3.0" stroke="#f6f264" stroke-width="1.8"/>
<path d="M1014.4 509.2v8.0" stroke="#0a84f2" stroke-width="2"/>
<path d="M1015.0 501.2h3.0" stroke="#f6f264" stroke-width="1.8"/>
<path d="M1018.8 498.3h2.5" stroke="#f6f264" stroke-width="1.8"/>
<path d="M1022.4 490.3v10.0" stroke="#f80000" stroke-width="2"/>
<path d="M1023.9 486.3h2.5" stroke="#f6f264" stroke-width="1.8"/>
<path d="M1026.9 486.3h4.5" stroke="#f6f264" stroke-width="1.8"/>
<path d="M1029.9 490.8h2.5" stroke="#f6f264" stroke-width="1.8"/>
<path d="M1036.5 477.8v5.0" stroke="#0a84f2" stroke-width="2"/>
<path d="M1038.9 484.2h3.0" stroke="#f6f264" stroke-width="1.8"/>
<path d="M1043.4 482.4h2.5" stroke="#f6f264" stroke-width="1.8"/>
<path d="M1047.9 481.2h4.5" stroke="#f6f264" stroke-width="1.8"/>
<path d="M1052.4 484.2h3.0" stroke="#f6f264" stroke-width="1.8"/>
<path d="M1050.9 487.2h2.5" stroke="#f6f264" stroke-width="1.8"/>
<path d="M1062.2 488.3v8.0" stroke="#0a84f2" stroke-width="2"/>
<path d="M1065.2 490.8v3.0" stroke="#f80000" stroke-width="2"/>
<path d="M1064.9 496.8h3.0" stroke="#f6f264" stroke-width="1.8"/>
<path d="M1072.7 496.8h4.5" stroke="#f6f264" stroke-width="1.8"/>
<path d="M1078.4 495.9v3.0" stroke="#0a84f2" stroke-width="2"/>
<path d="M1085.3 507.2h3.0" stroke="#f6f264" stroke-width="1.8"/>
<path d="M1083.8 509.7v10.0" stroke="#0a84f2" stroke-width="2"/>
<path d="M1086.8 512.2v8.0" stroke="#f80000" stroke-width="2"/>
<path d="M1095.8 521.6v3.0" stroke="#0a84f2" stroke-width="2"/>
<path d="M1098.7 520.2v10.0" stroke="#0a84f2" stroke-width="2"/>
<path d="M1101.7 521.3h2.5" stroke="#f6f264" stroke-width="1.8"/>
<path d="M1103.2 525.2h4.5" stroke="#f6f264" stroke-width="1.8"/>
<path d="M1108.3 518.1v10.0" stroke="#f80000" stroke-width="2"/>
<path d="M1109.8 525.2h3.0" stroke="#f6f264" stroke-width="1.8"/>
<path d="M1116.1 518.1v10.0" stroke="#f80000" stroke-width="2"/>
<path d="M1121.2 534.2h3.0" stroke="#f6f264" stroke-width="1.8"/>
<path d="M1128.7 536.6v3.0" stroke="#0a84f2" stroke-width="2"/>
<path d="M1129.6 547.0h2.5" stroke="#f6f264" stroke-width="1.8"/>
<path d="M1134.6 538.6v3.0" stroke="#0a84f2" stroke-width="2"/>
<path d="M1136.7 546.1h2.5" stroke="#f6f264" stroke-width="1.8"/>
<path d="M1143.0 552.2v10.0" stroke="#f80000" stroke-width="2"/>
<path d="M1145.1 550.6v3.0" stroke="#0a84f2" stroke-width="2"/>
<path d="M1150.2 543.7v3.0" stroke="#0a84f2" stroke-width="2"/>
<path d="M1155.6 533.3h3.0" stroke="#f6f264" stroke-width="1.8"/>
<path d="M1157.1 527.3h4.5" stroke="#f6f264" stroke-width="1.8"/>
<path d="M1161.0 515.2v5.0" stroke="#0a84f2" stroke-width="2"/>
<path d="M1167.6 520.1h2.5" stroke="#f6f264" stroke-width="1.8"/>
<path d="M1172.6 525.2h3.0" stroke="#f6f264" stroke-width="1.8"/>
<path d="M1175.6 510.2h4.5" stroke="#f6f264" stroke-width="1.8"/>
<path d="M1181.9 515.1v10.0" stroke="#0a84f2" stroke-width="2"/>
<path d="M1191.5 509.2v5.0" stroke="#f80000" stroke-width="2"/>
<path d="M1196.0 505.7v3.0" stroke="#0a84f2" stroke-width="2"/>
<path d="M1199.6 507.2h2.5" stroke="#f6f264" stroke-width="1.8"/>
<path d="M1205.0 510.2h3.0" stroke="#f6f264" stroke-width="1.8"/>
<path d="M1211.8 505.2v10.0" stroke="#0a84f2" stroke-width="2"/>
<path d="M1207.1 521.6v3.0" stroke="#0a84f2" stroke-width="2"/>
<path d="M1219.9 502.1h4.5" stroke="#f6f264" stroke-width="1.8"/>
<path d="M1224.4 496.8h3.0" stroke="#f6f264" stroke-width="1.8"/>
<path d="M1227.4 507.2h3.0" stroke="#f6f264" stroke-width="1.8"/>
<path d="M1231.9 511.7h2.5" stroke="#f6f264" stroke-width="1.8"/>
<path d="M1234.3 516.2h3.0" stroke="#f6f264" stroke-width="1.8"/>
<path d="M1235.8 506.3h3.0" stroke="#f6f264" stroke-width="1.8"/>
<path d="M1245.4 485.3v5.0" stroke="#f80000" stroke-width="2"/>
<path d="M1246.3 484.2h3.0" stroke="#f6f264" stroke-width="1.8"/>
<path d="M1252.8 473.3v5.0" stroke="#f80000" stroke-width="2"/>
<path d="M1254.3 471.3h4.5" stroke="#f6f264" stroke-width="1.8"/>
<path d="M1257.3 468.3h2.5" stroke="#f6f264" stroke-width="1.8"/>
<path d="M1261.2 473.4h3.0" stroke="#f6f264" stroke-width="1.8"/>
<path d="M1265.4 482.4h3.0" stroke="#f6f264" stroke-width="1.8"/>
<path d="M1267.8 490.8h4.5" stroke="#f6f264" stroke-width="1.8"/>
<path d="M1269.3 481.2h4.5" stroke="#f6f264" stroke-width="1.8"/>
<path d="M1273.2 465.3h2.5" stroke="#f6f264" stroke-width="1.8"/>
<path d="M1274.4 441.4h2.5" stroke="#f6f264" stroke-width="1.8"/>
<path d="M1279.8 431.4v5.0" stroke="#0a84f2" stroke-width="2"/>
<path d="M1281.3 442.4v10.0" stroke="#f80000" stroke-width="2"/>
<path d="M1282.8 451.9h3.0" stroke="#f6f264" stroke-width="1.8"/>
<path d="M1285.2 468.3h4.5" stroke="#f6f264" stroke-width="1.8"/>
<path d="M1289.6 451.4v10.0" stroke="#0a84f2" stroke-width="2"/>
<path d="M1292.6 455.4v5.0" stroke="#0a84f2" stroke-width="2"/>
<path d="M1294.7 447.4h4.5" stroke="#f6f264" stroke-width="1.8"/>
<path d="M1296.2 458.5h3.0" stroke="#f6f264" stroke-width="1.8"/>
<path d="M1301.3 469.8h2.5" stroke="#f6f264" stroke-width="1.8"/>
<path d="M1303.7 463.8h4.5" stroke="#f6f264" stroke-width="1.8"/>
<path d="M1309.7 466.4v8.0" stroke="#f80000" stroke-width="2"/>
<path d="M1315.7 483.8v5.0" stroke="#f80000" stroke-width="2"/>
<path d="M1316.3 499.2h2.5" stroke="#f6f264" stroke-width="1.8"/>
<path d="M1321.7 488.3v5.0" stroke="#f80000" stroke-width="2"/>
<path d="M1324.7 496.7v5.0" stroke="#0a84f2" stroke-width="2"/>
<path d="M1324.7 513.2h2.5" stroke="#f6f264" stroke-width="1.8"/>
<path d="M1327.6 522.2h3.0" stroke="#f6f264" stroke-width="1.8"/>
<path d="M1329.1 510.2h2.5" stroke="#f6f264" stroke-width="1.8"/>
<path d="M1332.1 499.2h3.0" stroke="#f6f264" stroke-width="1.8"/>
<path d="M1336.6 500.2v8.0" stroke="#f80000" stroke-width="2"/>
<path d="M1336.6 496.8h3.0" stroke="#f6f264" stroke-width="1.8"/>
<path d="M1340.5 501.2h3.0" stroke="#f6f264" stroke-width="1.8"/>
<path d="M1345.0 517.1h4.5" stroke="#f6f264" stroke-width="1.8"/>
<path d="M1350.1 509.1v10.0" stroke="#0a84f2" stroke-width="2"/>
<path d="M1353.1 509.2v5.0" stroke="#f80000" stroke-width="2"/>
<path d="M1356.1 514.1h3.0" stroke="#f6f264" stroke-width="1.8"/>
<path d="M1362.1 516.2h2.5" stroke="#f6f264" stroke-width="1.8"/>
<path d="M1365.6 515.1v10.0" stroke="#0a84f2" stroke-width="2"/>
<path d="M1367.4 524.6v3.0" stroke="#0a84f2" stroke-width="2"/>
<path d="M1371.0 517.2v10.0" stroke="#0a84f2" stroke-width="2"/>
<path d="M1371.9 514.1h2.5" stroke="#f6f264" stroke-width="1.8"/>
<path d="M1374.9 522.2h2.5" stroke="#f6f264" stroke-width="1.8"/>
<path d="M1379.1 520.1h4.5" stroke="#f6f264" stroke-width="1.8"/>
<path d="M1384.5 527.3h4.5" stroke="#f6f264" stroke-width="1.8"/>
<path d="M1389.0 528.3v10.0" stroke="#f80000" stroke-width="2"/>
<path d="M1392.0 534.2h4.5" stroke="#f6f264" stroke-width="1.8"/>
<path d="M1393.5 523.1h4.5" stroke="#f6f264" stroke-width="1.8"/>
<path d="M1398.0 510.7v8.0" stroke="#0a84f2" stroke-width="2"/>
<path d="M1400.1 520.1h2.5" stroke="#f6f264" stroke-width="1.8"/>
<path d="M1403.0 525.2h3.0" stroke="#f6f264" stroke-width="1.8"/>
<path d="M1405.4 532.7h4.5" stroke="#f6f264" stroke-width="1.8"/>
<path d="M1409.3 533.6v10.0" stroke="#0a84f2" stroke-width="2"/>
<path d="M1410.8 552.1h2.5" stroke="#f6f264" stroke-width="1.8"/>
<path d="M1413.8 549.1h4.5" stroke="#f6f264" stroke-width="1.8"/>
<path d="M1416.8 534.2h3.0" stroke="#f6f264" stroke-width="1.8"/>
<path d="M1417.4 537.2h3.0" stroke="#f6f264" stroke-width="1.8"/>
<path d="M1426.4 519.2h3.0" stroke="#f6f264" stroke-width="1.8"/>
<path d="M1432.4 509.2v5.0" stroke="#0a84f2" stroke-width="2"/>
<path d="M1433.0 508.1h3.0" stroke="#f6f264" stroke-width="1.8"/>
<path d="M1436.0 529.1h4.5" stroke="#f6f264" stroke-width="1.8"/>
<path d="M1441.4 541.5v5.0" stroke="#f80000" stroke-width="2"/>
<path d="M1442.8 553.6h2.5" stroke="#f6f264" stroke-width="1.8"/>
<path d="M1445.8 565.0h2.5" stroke="#f6f264" stroke-width="1.8"/>
<path d="M1452.1 564.1h2.5" stroke="#f6f264" stroke-width="1.8"/>
<path d="M1456.0 566.1v8.0" stroke="#f80000" stroke-width="2"/>
<path d="M1459.6 574.6v3.0" stroke="#f80000" stroke-width="2"/>
<path d="M1463.5 577.5v3.0" stroke="#0a84f2" stroke-width="2"/>
<path d="M1468.0 553.6v3.0" stroke="#f80000" stroke-width="2"/>
<path d="M1473.9 564.1h2.5" stroke="#f6f264" stroke-width="1.8"/>
<path d="M1477.5 574.6v3.0" stroke="#f80000" stroke-width="2"/>
<path d="M1478.4 585.0h3.0" stroke="#f6f264" stroke-width="1.8"/>
<path d="M1482.0 589.5h4.5" stroke="#f6f264" stroke-width="1.8"/>
<path d="M1485.9 581.0v8.0" stroke="#f80000" stroke-width="2"/>
<path d="M1488.0 569.2h4.5" stroke="#f6f264" stroke-width="1.8"/>
<path d="M1494.0 563.2h3.0" stroke="#f6f264" stroke-width="1.8"/>
<path d="M1503.3 573.6v5.0" stroke="#f80000" stroke-width="2"/>
<path d="M1505.4 582.0v3.0" stroke="#0a84f2" stroke-width="2"/>
<path d="M1508.3 576.5v5.0" stroke="#0a84f2" stroke-width="2"/>
<path d="M1511.3 570.1h4.5" stroke="#f6f264" stroke-width="1.8"/>
<path d="M1514.9 569.2h2.5" stroke="#f6f264" stroke-width="1.8"/>
<path d="M1520.3 562.1v10.0" stroke="#f80000" stroke-width="2"/>
<path d="M1521.8 572.2h4.5" stroke="#f6f264" stroke-width="1.8"/>
<path d="M1524.8 556.0h3.0" stroke="#f6f264" stroke-width="1.8"/>
<path d="M1525.7 564.1h3.0" stroke="#f6f264" stroke-width="1.8"/>
<path d="M1533.8 570.2v10.0" stroke="#0a84f2" stroke-width="2"/>
<path d="M1537.4 580.1v8.0" stroke="#0a84f2" stroke-width="2"/>
<path d="M1540.4 565.1v10.0" stroke="#0a84f2" stroke-width="2"/>
<path d="M1544.3 572.5v3.0" stroke="#0a84f2" stroke-width="2"/>
<path d="M1545.2 581.9v8.0" stroke="#f80000" stroke-width="2"/>
<path d="M1550.2 571.1v10.0" stroke="#f80000" stroke-width="2"/>
<path d="M1550.2 567.1h3.0" stroke="#f6f264" stroke-width="1.8"/>
<path d="M1556.2 576.1h3.0" stroke="#f6f264" stroke-width="1.8"/>
<path d="M1569.1 578.4v3.0" stroke="#f80000" stroke-width="2"/>
<path d="M1570.3 580.9v10.0" stroke="#0a84f2" stroke-width="2"/>
<path d="M1572.1 589.1v8.0" stroke="#f80000" stroke-width="2"/>
<path d="M1575.1 599.0v8.0" stroke="#f80000" stroke-width="2"/>
<path d="M1578.7 610.0v10.0" stroke="#f80000" stroke-width="2"/>
<path d="M1581.7 612.0v10.0" stroke="#f80000" stroke-width="2"/>
<path d="M1583.7 603.0h4.5" stroke="#f6f264" stroke-width="1.8"/>
<path d="M1585.5 596.1h3.0" stroke="#f6f264" stroke-width="1.8"/>
<path d="M1591.5 579.0h3.0" stroke="#f6f264" stroke-width="1.8"/>
<path d="M1595.1 577.1v8.0" stroke="#0a84f2" stroke-width="2"/>
<path d="M1599.0 565.1v10.0" stroke="#0a84f2" stroke-width="2"/>
<path d="M1601.1 564.1v3.0" stroke="#f80000" stroke-width="2"/>
<path d="M1601.7 559.6h2.5" stroke="#f6f264" stroke-width="1.8"/>
<path d="M1605.6 548.1v5.0" stroke="#0a84f2" stroke-width="2"/>
<path d="M1606.5 544.0h3.0" stroke="#f6f264" stroke-width="1.8"/>
<path d="M1608.6 538.6h4.5" stroke="#f6f264" stroke-width="1.8"/>
<path d="M1612.2 543.1v3.0" stroke="#f80000" stroke-width="2"/>
<path d="M1619.1 564.6v5.0" stroke="#f80000" stroke-width="2"/>
<path d="M1623.5 569.2h2.5" stroke="#f6f264" stroke-width="1.8"/>
<path d="M1633.1 546.6v5.0" stroke="#0a84f2" stroke-width="2"/>
<path d="M1634.9 548.5v3.0" stroke="#f80000" stroke-width="2"/>
<path d="M1639.1 560.1v8.0" stroke="#0a84f2" stroke-width="2"/>
<path d="M1641.5 567.1h4.5" stroke="#f6f264" stroke-width="1.8"/>
<path d="M1646.0 552.2v10.0" stroke="#f80000" stroke-width="2"/>
<path d="M1652.0 548.1v8.0" stroke="#0a84f2" stroke-width="2"/>
<path d="M1655.0 564.1h4.5" stroke="#f6f264" stroke-width="1.8"/>
<path d="M1658.0 543.6v5.0" stroke="#0a84f2" stroke-width="2"/>
<path d="M1663.9 564.6v5.0" stroke="#f80000" stroke-width="2"/>
<path d="M1670.8 556.6v3.0" stroke="#f80000" stroke-width="2"/>
<path d="M1672.9 559.1v10.0" stroke="#0a84f2" stroke-width="2"/>
<path d="M1677.4 552.1v3.0" stroke="#0a84f2" stroke-width="2"/>
<path d="M1679.8 543.0v8.0" stroke="#0a84f2" stroke-width="2"/>
<path d="M1682.8 546.1v3.0" stroke="#0a84f2" stroke-width="2"/>
<path d="M1690.0 550.6v3.0" stroke="#0a84f2" stroke-width="2"/>
<path d="M1690.3 567.1h2.5" stroke="#f6f264" stroke-width="1.8"/>
<path d="M1693.9 565.1v10.0" stroke="#f80000" stroke-width="2"/>
<path d="M1693.9 579.0h2.5" stroke="#f6f264" stroke-width="1.8"/>
<path d="M1697.8 587.0v5.0" stroke="#0a84f2" stroke-width="2"/>
<path d="M1707.3 587.1h2.5" stroke="#f6f264" stroke-width="1.8"/>
<path d="M1713.3 580.5h2.5" stroke="#f6f264" stroke-width="1.8"/>
<path d="M1716.3 584.1h4.5" stroke="#f6f264" stroke-width="1.8"/>
<path d="M1723.2 596.4h3.0" stroke="#f6f264" stroke-width="1.8"/>
<path d="M1747.7 584.1h2.5" stroke="#f6f264" stroke-width="1.8"/>
<path d="M1755.2 596.4h3.0" stroke="#f6f264" stroke-width="1.8"/>
<path d="M1759.7 590.1h4.5" stroke="#f6f264" stroke-width="1.8"/>
<path d="M1764.2 588.0h4.5" stroke="#f6f264" stroke-width="1.8"/>
<path d="M1767.8 586.1v8.0" stroke="#f80000" stroke-width="2"/>
<path d="M1772.6 575.0v8.0" stroke="#f80000" stroke-width="2"/>
<path d="M1775.3 573.1h2.5" stroke="#f6f264" stroke-width="1.8"/>
<path d="M1777.0 569.2h4.5" stroke="#f6f264" stroke-width="1.8"/>
<path d="M1783.6 573.1h2.5" stroke="#f6f264" stroke-width="1.8"/>
<path d="M1788.1 570.1h4.5" stroke="#f6f264" stroke-width="1.8"/>
<path d="M1794.1 576.1h4.5" stroke="#f6f264" stroke-width="1.8"/>
<path d="M1798.6 570.6v5.0" stroke="#0a84f2" stroke-width="2"/>
<path d="M1818.0 585.9h2.5" stroke="#f6f264" stroke-width="1.8"/>
<path d="M1821.0 585.0h4.5" stroke="#f6f264" stroke-width="1.8"/>
<path d="M1824.0 587.1h3.0" stroke="#f6f264" stroke-width="1.8"/>
<path d="M1834.5 585.6v3.0" stroke="#f80000" stroke-width="2"/>
<path d="M1837.5 582.1v10.0" stroke="#0a84f2" stroke-width="2"/>
<path d="M1839.9 577.0h3.0" stroke="#f6f264" stroke-width="1.8"/>
<path d="M1846.5 575.2h2.5" stroke="#f6f264" stroke-width="1.8"/>
<path d="M1851.0 573.1h4.5" stroke="#f6f264" stroke-width="1.8"/>
<path d="M1856.9 574.6v3.0" stroke="#0a84f2" stroke-width="2"/>
<path d="M1859.9 570.1h4.5" stroke="#f6f264" stroke-width="1.8"/>
<path d="M1864.4 566.1v5.0" stroke="#0a84f2" stroke-width="2"/>
<path d="M1867.4 555.2v10.0" stroke="#0a84f2" stroke-width="2"/>
<path d="M1869.8 563.2h3.0" stroke="#f6f264" stroke-width="1.8"/>
<path d="M1872.8 550.0h4.5" stroke="#f6f264" stroke-width="1.8"/>
<path d="M1875.8 547.0h2.5" stroke="#f6f264" stroke-width="1.8"/>
<path d="M1880.9 547.0h3.0" stroke="#f6f264" stroke-width="1.8"/>
<path d="M1885.4 539.0v10.0" stroke="#0a84f2" stroke-width="2"/>
<path d="M1888.4 543.1h4.5" stroke="#f6f264" stroke-width="1.8"/>
<path d="M1892.8 541.0h2.5" stroke="#f6f264" stroke-width="1.8"/>
<path d="M1896.4 530.1v10.0" stroke="#f80000" stroke-width="2"/>
<path d="M1898.8 527.2v5.0" stroke="#0a84f2" stroke-width="2"/>
<path d="M1898.8 523.7h2.5" stroke="#f6f264" stroke-width="1.8"/>
<path d="M1900.3 526.1h2.5" stroke="#f6f264" stroke-width="1.8"/>
<rect x="1906.5" y="137.3" width="92.8" height="34.4" fill="#d4d4d4"/>
<rect x="1906.5" y="510.3" width="92.8" height="34.4" fill="#d4d4d4"/>
<rect x="1906.5" y="841.4" width="92.8" height="34.4" fill="#d4d4d4"/>
<text x="28.1" y="0" fill="#c8c8c8" font-size="16.08" transform="translate(0 386.6) scale(1 1.32)">04</text>
<text x="119.1" y="0" fill="#c8c8c8" font-size="16.08" transform="translate(0 386.6) scale(1 1.32)">05</text>
<text x="215.8" y="0" fill="#c8c8c8" font-size="16.08" transform="translate(0 386.6) scale(1 1.32)">09</text>
<text x="311.4" y="0" fill="#c8c8c8" font-size="16.08" transform="translate(0 386.6) scale(1 1.32)">10</text>
<text x="405.1" y="0" fill="#c8c8c8" font-size="16.08" transform="translate(0 386.6) scale(1 1.32)">11</text>
<text x="500.6" y="0" fill="#c8c8c8" font-size="16.08" transform="translate(0 386.6) scale(1 1.32)">12</text>
<text x="593.9" y="0" fill="#c8c8c8" font-size="16.08" transform="translate(0 386.6) scale(1 1.32)">13</text>
<text x="686.3" y="0" fill="#c8c8c8" font-size="16.08" transform="translate(0 386.6) scale(1 1.32)">14</text>
<text x="781.4" y="0" fill="#c8c8c8" font-size="16.08" transform="translate(0 386.6) scale(1 1.32)">15</text>
<text x="845.1" y="0" fill="#c8c8c8" font-size="16.08" transform="translate(0 386.6) scale(1 1.32)">17</text>
<text x="940.5" y="0" fill="#c8c8c8" font-size="16.08" transform="translate(0 386.6) scale(1 1.32)">18</text>
<text x="1031.1" y="0" fill="#c8c8c8" font-size="16.08" transform="translate(0 386.6) scale(1 1.32)">19</text>
<text x="1126.7" y="0" fill="#c8c8c8" font-size="16.08" transform="translate(0 386.6) scale(1 1.32)">20</text>
<text x="1221.9" y="0" fill="#c8c8c8" font-size="16.08" transform="translate(0 386.6) scale(1 1.32)">21</text>
<text x="1315.7" y="0" fill="#c8c8c8" font-size="16.08" transform="translate(0 386.6) scale(1 1.32)">22</text>
<text x="1411.1" y="0" fill="#c8c8c8" font-size="16.08" transform="translate(0 386.6) scale(1 1.32)">23</text>
<text x="1505.1" y="0" fill="#c8c8c8" font-size="16.08" transform="translate(0 386.6) scale(1 1.32)">00</text>
<text x="1579.6" y="0" fill="#c8c8c8" font-size="16.08" transform="translate(0 386.6) scale(1 1.32)">01</text>
<text x="1668.8" y="0" fill="#c8c8c8" font-size="16.08" transform="translate(0 386.6) scale(1 1.32)">02</text>
<text x="1731.1" y="0" fill="#c8c8c8" font-size="16.08" transform="translate(0 386.6) scale(1 1.32)">03</text>
<text x="1792.1" y="0" fill="#c8c8c8" font-size="16.08" transform="translate(0 386.6) scale(1 1.32)">04</text>
<text x="1862.3" y="0" fill="#c8c8c8" font-size="16.08" transform="translate(0 386.6) scale(1 1.32)">0506</text>
<text x="166.3" y="0" fill="#ffffff" font-size="16.08" font-weight="bold" transform="translate(0 386.6) scale(1 1.32)">06</text>
<text x="1909" y="0" fill="#c8c8c8" font-size="16.08" transform="translate(0 123) scale(1 1.32)">15,500</text>
<text x="1909" y="0" fill="#c8c8c8" font-size="16.08" transform="translate(0 200) scale(1 1.32)">15,450</text>
<text x="1909" y="0" fill="#c8c8c8" font-size="16.08" transform="translate(0 275) scale(1 1.32)">15,400</text>
<text x="1909" y="0" fill="#c8c8c8" font-size="16.08" transform="translate(0 351.3) scale(1 1.32)">15,350</text>
<text x="1505.5" y="0" fill="#c8c8c8" font-size="16.08" transform="translate(0 362.5) scale(1 1.32)">30</text>
<text x="1923.9" y="0" fill="#000" font-size="16.08" font-weight="bold" transform="translate(0 159.7) scale(1 1.32)">15,482</text>
<text x="28.1" y="0" fill="#c8c8c8" font-size="16.08" transform="translate(0 742.6) scale(1 1.32)">04</text>
<text x="119.1" y="0" fill="#c8c8c8" font-size="16.08" transform="translate(0 742.6) scale(1 1.32)">05</text>
<text x="215.8" y="0" fill="#c8c8c8" font-size="16.08" transform="translate(0 742.6) scale(1 1.32)">09</text>
<text x="311.4" y="0" fill="#c8c8c8" font-size="16.08" transform="translate(0 742.6) scale(1 1.32)">10</text>
<text x="405.1" y="0" fill="#c8c8c8" font-size="16.08" transform="translate(0 742.6) scale(1 1.32)">11</text>
<text x="500.6" y="0" fill="#c8c8c8" font-size="16.08" transform="translate(0 742.6) scale(1 1.32)">12</text>
<text x="593.9" y="0" fill="#c8c8c8" font-size="16.08" transform="translate(0 742.6) scale(1 1.32)">13</text>
<text x="686.3" y="0" fill="#c8c8c8" font-size="16.08" transform="translate(0 742.6) scale(1 1.32)">14</text>
<text x="781.4" y="0" fill="#c8c8c8" font-size="16.08" transform="translate(0 742.6) scale(1 1.32)">15</text>
<text x="845.1" y="0" fill="#c8c8c8" font-size="16.08" transform="translate(0 742.6) scale(1 1.32)">17</text>
<text x="940.5" y="0" fill="#c8c8c8" font-size="16.08" transform="translate(0 742.6) scale(1 1.32)">18</text>
<text x="1031.1" y="0" fill="#c8c8c8" font-size="16.08" transform="translate(0 742.6) scale(1 1.32)">19</text>
<text x="1126.7" y="0" fill="#c8c8c8" font-size="16.08" transform="translate(0 742.6) scale(1 1.32)">20</text>
<text x="1221.9" y="0" fill="#c8c8c8" font-size="16.08" transform="translate(0 742.6) scale(1 1.32)">21</text>
<text x="1315.7" y="0" fill="#c8c8c8" font-size="16.08" transform="translate(0 742.6) scale(1 1.32)">22</text>
<text x="1411.1" y="0" fill="#c8c8c8" font-size="16.08" transform="translate(0 742.6) scale(1 1.32)">23</text>
<text x="1505.1" y="0" fill="#c8c8c8" font-size="16.08" transform="translate(0 742.6) scale(1 1.32)">00</text>
<text x="1579.6" y="0" fill="#c8c8c8" font-size="16.08" transform="translate(0 742.6) scale(1 1.32)">01</text>
<text x="1668.8" y="0" fill="#c8c8c8" font-size="16.08" transform="translate(0 742.6) scale(1 1.32)">02</text>
<text x="1731.1" y="0" fill="#c8c8c8" font-size="16.08" transform="translate(0 742.6) scale(1 1.32)">03</text>
<text x="1792.1" y="0" fill="#c8c8c8" font-size="16.08" transform="translate(0 742.6) scale(1 1.32)">04</text>
<text x="1862.3" y="0" fill="#c8c8c8" font-size="16.08" transform="translate(0 742.6) scale(1 1.32)">0506</text>
<text x="166.3" y="0" fill="#ffffff" font-size="16.08" font-weight="bold" transform="translate(0 742.6) scale(1 1.32)">06</text>
<text x="1909" y="0" fill="#c8c8c8" font-size="16.08" transform="translate(0 443.7) scale(1 1.32)">4,800</text>
<text x="1909" y="0" fill="#c8c8c8" font-size="16.08" transform="translate(0 609) scale(1 1.32)">4,750</text>
<text x="1909" y="0" fill="#c8c8c8" font-size="16.08" transform="translate(0 691.8) scale(1 1.32)">4,725</text>
<text x="1505.5" y="0" fill="#c8c8c8" font-size="16.08" transform="translate(0 718.5) scale(1 1.32)">30</text>
<text x="1928.75" y="0" fill="#000" font-size="16.08" font-weight="bold" transform="translate(0 532.7) scale(1 1.32)">4,776</text>
<text x="28.1" y="0" fill="#c8c8c8" font-size="16.08" transform="translate(0 1064.8) scale(1 1.32)">04</text>
<text x="119.1" y="0" fill="#c8c8c8" font-size="16.08" transform="translate(0 1064.8) scale(1 1.32)">05</text>
<text x="215.8" y="0" fill="#c8c8c8" font-size="16.08" transform="translate(0 1064.8) scale(1 1.32)">09</text>
<text x="311.4" y="0" fill="#c8c8c8" font-size="16.08" transform="translate(0 1064.8) scale(1 1.32)">10</text>
<text x="405.1" y="0" fill="#c8c8c8" font-size="16.08" transform="translate(0 1064.8) scale(1 1.32)">11</text>
<text x="500.6" y="0" fill="#c8c8c8" font-size="16.08" transform="translate(0 1064.8) scale(1 1.32)">12</text>
<text x="593.9" y="0" fill="#c8c8c8" font-size="16.08" transform="translate(0 1064.8) scale(1 1.32)">13</text>
<text x="686.3" y="0" fill="#c8c8c8" font-size="16.08" transform="translate(0 1064.8) scale(1 1.32)">14</text>
<text x="781.4" y="0" fill="#c8c8c8" font-size="16.08" transform="translate(0 1064.8) scale(1 1.32)">15</text>
<text x="845.1" y="0" fill="#c8c8c8" font-size="16.08" transform="translate(0 1064.8) scale(1 1.32)">17</text>
<text x="940.5" y="0" fill="#c8c8c8" font-size="16.08" transform="translate(0 1064.8) scale(1 1.32)">18</text>
<text x="1031.1" y="0" fill="#c8c8c8" font-size="16.08" transform="translate(0 1064.8) scale(1 1.32)">19</text>
<text x="1126.7" y="0" fill="#c8c8c8" font-size="16.08" transform="translate(0 1064.8) scale(1 1.32)">20</text>
<text x="1221.9" y="0" fill="#c8c8c8" font-size="16.08" transform="translate(0 1064.8) scale(1 1.32)">21</text>
<text x="1315.7" y="0" fill="#c8c8c8" font-size="16.08" transform="translate(0 1064.8) scale(1 1.32)">22</text>
<text x="1411.1" y="0" fill="#c8c8c8" font-size="16.08" transform="translate(0 1064.8) scale(1 1.32)">23</text>
<text x="1505.1" y="0" fill="#c8c8c8" font-size="16.08" transform="translate(0 1064.8) scale(1 1.32)">00</text>
<text x="1579.6" y="0" fill="#c8c8c8" font-size="16.08" transform="translate(0 1064.8) scale(1 1.32)">01</text>
<text x="1668.8" y="0" fill="#c8c8c8" font-size="16.08" transform="translate(0 1064.8) scale(1 1.32)">02</text>
<text x="1731.1" y="0" fill="#c8c8c8" font-size="16.08" transform="translate(0 1064.8) scale(1 1.32)">03</text>
<text x="1792.1" y="0" fill="#c8c8c8" font-size="16.08" transform="translate(0 1064.8) scale(1 1.32)">04</text>
<text x="1862.3" y="0" fill="#c8c8c8" font-size="16.08" transform="translate(0 1064.8) scale(1 1.32)">0506</text>
<text x="166.3" y="0" fill="#ffffff" font-size="16.08" font-weight="bold" transform="translate(0 1064.8) scale(1 1.32)">06</text>
<text x="1909" y="0" fill="#c8c8c8" font-size="16.08" transform="translate(0 782.4) scale(1 1.32)">10,750</text>
<text x="1909" y="0" fill="#c8c8c8" font-size="16.08" transform="translate(0 946.2) scale(1 1.32)">10,650</text>
<text x="1909" y="0" fill="#c8c8c8" font-size="16.08" transform="translate(0 1027.5) scale(1 1.32)">10,600</text>
<text x="1505.5" y="0" fill="#c8c8c8" font-size="16.08" transform="translate(0 1040.7) scale(1 1.32)">30</text>
<text x="1923.9" y="0" fill="#000" font-size="16.08" font-weight="bold" transform="translate(0 863.8) scale(1 1.32)">10,706</text>
<text x="10.7" y="96" fill="#cccccc" font-size="19.3">時刻</text>
<text x="49.3" y="0" fill="#cccccc" font-size="16.08" style="white-space:pre" transform="translate(0 96) scale(1 1.32)">:06:00 </text>
<text x="116.85" y="96" fill="#cccccc" font-size="19.3">始値</text>
<text x="155.45" y="0" fill="#cccccc" font-size="16.08" style="white-space:pre" transform="translate(0 96) scale(1 1.32)">:15,482 </text>
<text x="232.65" y="96" fill="#cccccc" font-size="19.3">高値</text>
<text x="271.25" y="0" fill="#cccccc" font-size="16.08" style="white-space:pre" transform="translate(0 96) scale(1 1.32)">:15,482 </text>
<text x="348.45" y="96" fill="#cccccc" font-size="19.3">安値</text>
<text x="387.05" y="0" fill="#cccccc" font-size="16.08" style="white-space:pre" transform="translate(0 96) scale(1 1.32)">:15,482 </text>
<text x="464.25" y="96" fill="#cccccc" font-size="19.3">終値</text>
<text x="502.85" y="0" fill="#cccccc" font-size="16.08" style="white-space:pre" transform="translate(0 96) scale(1 1.32)">:15,482</text>
<text x="10.7" y="424.5" fill="#cccccc" font-size="19.3">時刻</text>
<text x="49.3" y="0" fill="#cccccc" font-size="16.08" style="white-space:pre" transform="translate(0 424.5) scale(1 1.32)">:06:00 </text>
<text x="116.85" y="424.5" fill="#cccccc" font-size="19.3">始値</text>
<text x="155.45" y="0" fill="#cccccc" font-size="16.08" style="white-space:pre" transform="translate(0 424.5) scale(1 1.32)">:--- </text>
<text x="203.7" y="424.5" fill="#cccccc" font-size="19.3">高値</text>
<text x="242.3" y="0" fill="#cccccc" font-size="16.08" style="white-space:pre" transform="translate(0 424.5) scale(1 1.32)">:--- </text>
<text x="290.55" y="424.5" fill="#cccccc" font-size="19.3">安値</text>
<text x="329.15" y="0" fill="#cccccc" font-size="16.08" style="white-space:pre" transform="translate(0 424.5) scale(1 1.32)">:--- </text>
<text x="377.4" y="424.5" fill="#cccccc" font-size="19.3">終値</text>
<text x="416" y="0" fill="#cccccc" font-size="16.08" style="white-space:pre" transform="translate(0 424.5) scale(1 1.32)">:---</text>
<text x="10.7" y="0" fill="#cccccc" font-size="16.08" style="white-space:pre" transform="translate(0 780) scale(1 1.32)">[</text>
<text x="20.35" y="780" fill="#cccccc" font-size="19.3">金</text>
<text x="39.65" y="0" fill="#cccccc" font-size="16.08" style="white-space:pre" transform="translate(0 780) scale(1 1.32)"> 26/04 15,482</text>
<text x="165.1" y="780" fill="#cccccc" font-size="19.3">×</text>
<text x="184.4" y="0" fill="#cccccc" font-size="16.08" style="white-space:pre" transform="translate(0 780) scale(1 1.32)">1.00]</text>
<text x="232.65" y="780" fill="#cccccc" font-size="19.3">－</text>
<text x="251.95" y="0" fill="#cccccc" font-size="16.08" style="white-space:pre" transform="translate(0 780) scale(1 1.32)">[</text>
<text x="261.6" y="780" fill="#cccccc" font-size="19.3">白金</text>
<text x="300.2" y="0" fill="#cccccc" font-size="16.08" style="white-space:pre" transform="translate(0 780) scale(1 1.32)"> 26/04 4,776</text>
<text x="416" y="780" fill="#cccccc" font-size="19.3">×</text>
<text x="435.3" y="0" fill="#cccccc" font-size="16.08" style="white-space:pre" transform="translate(0 780) scale(1 1.32)">1.00] </text>
<text x="493.2" y="780" fill="#cccccc" font-size="19.3">終値</text>
<text x="531.8" y="0" fill="#cccccc" font-size="16.08" style="white-space:pre" transform="translate(0 780) scale(1 1.32)"> </text>
<text x="541.45" y="780" fill="#cccccc" font-size="19.3">時刻</text>
<text x="580.05" y="0" fill="#cccccc" font-size="16.08" style="white-space:pre" transform="translate(0 780) scale(1 1.32)">:06:00 10,706</text>
</svg>
</body></html>
